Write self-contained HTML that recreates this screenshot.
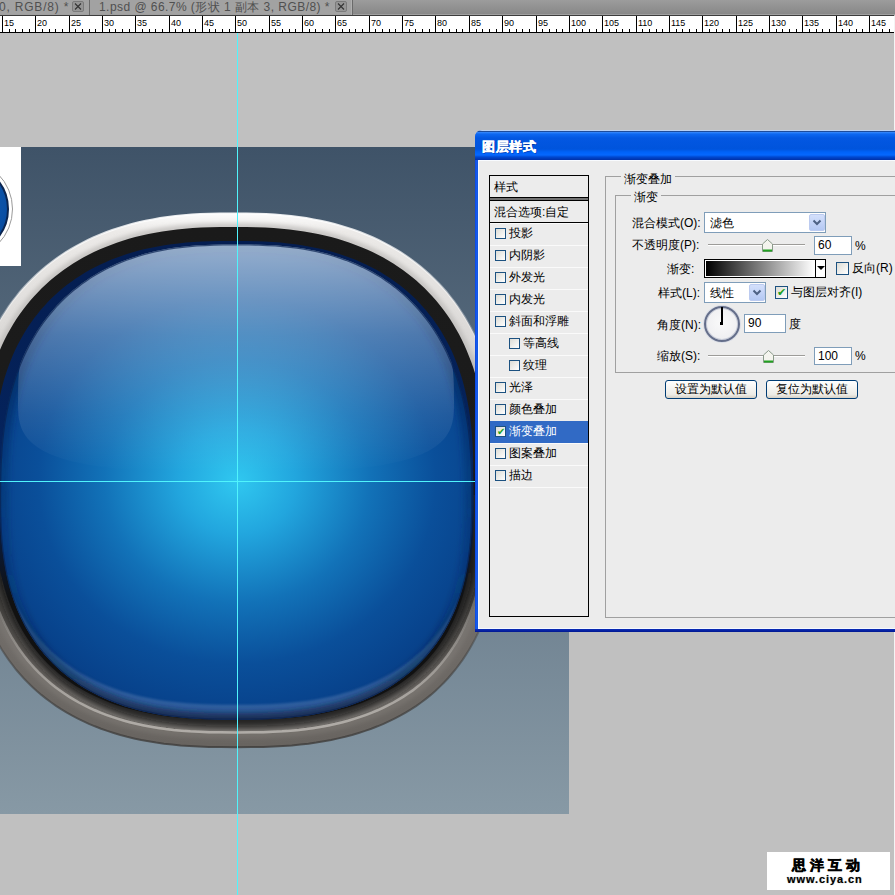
<!DOCTYPE html>
<html><head><meta charset="utf-8">
<style>
*{margin:0;padding:0;box-sizing:border-box}
html,body{width:895px;height:895px;overflow:hidden;background:#c0c0c0;font-family:"Liberation Sans",sans-serif}
.abs{position:absolute}
.rl{position:absolute;top:19px;font-size:9px;line-height:9px;color:#000;letter-spacing:0}
#tabs{position:absolute;left:0;top:0;width:895px;height:15px;background:linear-gradient(#9c9c9c,#888 14px,#a0a0a0 14px)}
.tab{position:absolute;top:0;height:14px;background:#a2a2a2;color:#505050;font-size:12px;line-height:12px;white-space:nowrap;overflow:hidden}
.xb{position:absolute;top:1px;width:12px;height:11px;border:1px solid #7a7a7a;background:#959595;border-radius:2px}
#ruler{position:absolute;left:0;top:15px;width:894px;height:18px;background:#fff;border-top:1px solid #3c3c3c;border-bottom:1px solid #000}
#doc{position:absolute;left:0;top:147px;width:569px;height:667px;background:linear-gradient(#3f5368,#8799a5)}
#dlg{position:absolute;left:475px;top:130px;width:430px;height:502px;background:linear-gradient(90deg,#0a48e0,#1a5ef0 2px,#0a50d8 3px);border-radius:7px 7px 0 0}
#title{position:absolute;left:0;top:0;width:100%;height:30px;border-radius:7px 7px 0 0;background:linear-gradient(#b8cff2 0,#b8cff2 1px,#1d4c9c 1px,#1d4c9c 2px,#3a8afc 2px,#0d68f2 4px,#0357e2 8px,#0054dc 19px,#0062f8 22px,#0568fe 25px,#0048d0 27px,#0030a8 30px)}
#title span{position:absolute;left:7px;top:10px;color:#fff;font-weight:bold;font-size:13px;line-height:14px;letter-spacing:0.5px;-webkit-text-stroke:0.35px #fff;text-shadow:1px 1px 0 rgba(0,30,120,0.5)}
#body{position:absolute;left:4px;top:30px;width:430px;height:468px;background:#ececec;box-shadow:inset 0 1px 0 #f8fbff}
#bb{position:absolute;left:0;top:499px;width:100%;height:3px;background:linear-gradient(#0b2cb8,#001890)}
.list{position:absolute;left:10px;top:15px;width:100px;height:442px;border:1px solid #000;background:#ececec}
.row{position:absolute;left:0;width:98px;height:22px;border-top:1px solid #fafafa;font-size:12px;color:#000}
.row.sel{background:#316ac5;color:#fff;border-top-color:#316ac5}
.lt{position:absolute;top:3px;line-height:14px;white-space:nowrap}
.cb{display:block;width:11px;height:11px;border:1px solid #1c5180;background:linear-gradient(135deg,#dcdcd6,#fff);font-size:10px;line-height:9px;color:#21a121;text-align:center}
.gb{position:absolute;border:1px solid #a0a0a0}
.gl{position:absolute;background:#ececec;font-size:12px;line-height:14px;padding:0 3px;white-space:nowrap}
.lab{position:absolute;font-size:12px;line-height:14px;white-space:nowrap;text-align:right}
.inp{position:absolute;background:#fff;border:1px solid #7f9db9;font-size:12px;line-height:16px;padding-left:3px}
.btn{position:absolute;height:19px;border:1px solid #003c74;border-radius:3px;background:linear-gradient(#fff,#ecebe6 80%,#d6d0c5);font-size:12px;line-height:16px;text-align:center}
</style></head><body>
<div id="tabs">
 <div class="tab" style="left:0;width:89px"><span style="position:absolute;left:-1px;top:1px;letter-spacing:0.8px">0, RGB/8) *</span><div class="xb" style="left:72px"><svg width="10" height="9" style="position:absolute;left:0;top:0"><path d="M2 1.5L8 7.5M8 1.5L2 7.5" stroke="#333" stroke-width="1.1"/></svg></div></div>
 <div style="position:absolute;left:89px;top:0;width:1px;height:15px;background:#6a6a6a"></div>
 <div class="tab" style="left:90px;width:262px"><span style="position:absolute;left:9px;top:1px;letter-spacing:0.45px">1.psd @ 66.7% (形状 1 副本 3, RGB/8) *</span><div class="xb" style="left:245px"><svg width="10" height="9" style="position:absolute;left:0;top:0"><path d="M2 1.5L8 7.5M8 1.5L2 7.5" stroke="#333" stroke-width="1.1"/></svg></div></div>
 <div style="position:absolute;left:351px;top:0;width:1px;height:15px;background:#b0b0b0"></div>
 <div style="position:absolute;left:352px;top:0;width:1px;height:15px;background:#6a6a6a"></div>
</div>
<div id="ruler"></div>
<div style="position:absolute;left:2px;top:16px;width:1px;height:16px;background:#000"></div>
<div class="rl" style="left:4px">15</div>
<div style="position:absolute;left:9px;top:29px;width:1px;height:3px;background:#000"></div>
<div style="position:absolute;left:15px;top:29px;width:1px;height:3px;background:#000"></div>
<div style="position:absolute;left:22px;top:29px;width:1px;height:3px;background:#000"></div>
<div style="position:absolute;left:29px;top:29px;width:1px;height:3px;background:#000"></div>
<div style="position:absolute;left:35px;top:16px;width:1px;height:16px;background:#000"></div>
<div class="rl" style="left:37px">20</div>
<div style="position:absolute;left:42px;top:29px;width:1px;height:3px;background:#000"></div>
<div style="position:absolute;left:49px;top:29px;width:1px;height:3px;background:#000"></div>
<div style="position:absolute;left:55px;top:29px;width:1px;height:3px;background:#000"></div>
<div style="position:absolute;left:62px;top:29px;width:1px;height:3px;background:#000"></div>
<div style="position:absolute;left:69px;top:16px;width:1px;height:16px;background:#000"></div>
<div class="rl" style="left:71px">25</div>
<div style="position:absolute;left:75px;top:29px;width:1px;height:3px;background:#000"></div>
<div style="position:absolute;left:82px;top:29px;width:1px;height:3px;background:#000"></div>
<div style="position:absolute;left:89px;top:29px;width:1px;height:3px;background:#000"></div>
<div style="position:absolute;left:95px;top:29px;width:1px;height:3px;background:#000"></div>
<div style="position:absolute;left:102px;top:16px;width:1px;height:16px;background:#000"></div>
<div class="rl" style="left:104px">30</div>
<div style="position:absolute;left:109px;top:29px;width:1px;height:3px;background:#000"></div>
<div style="position:absolute;left:115px;top:29px;width:1px;height:3px;background:#000"></div>
<div style="position:absolute;left:122px;top:29px;width:1px;height:3px;background:#000"></div>
<div style="position:absolute;left:129px;top:29px;width:1px;height:3px;background:#000"></div>
<div style="position:absolute;left:135px;top:16px;width:1px;height:16px;background:#000"></div>
<div class="rl" style="left:137px">35</div>
<div style="position:absolute;left:142px;top:29px;width:1px;height:3px;background:#000"></div>
<div style="position:absolute;left:149px;top:29px;width:1px;height:3px;background:#000"></div>
<div style="position:absolute;left:155px;top:29px;width:1px;height:3px;background:#000"></div>
<div style="position:absolute;left:162px;top:29px;width:1px;height:3px;background:#000"></div>
<div style="position:absolute;left:169px;top:16px;width:1px;height:16px;background:#000"></div>
<div class="rl" style="left:171px">40</div>
<div style="position:absolute;left:175px;top:29px;width:1px;height:3px;background:#000"></div>
<div style="position:absolute;left:182px;top:29px;width:1px;height:3px;background:#000"></div>
<div style="position:absolute;left:189px;top:29px;width:1px;height:3px;background:#000"></div>
<div style="position:absolute;left:195px;top:29px;width:1px;height:3px;background:#000"></div>
<div style="position:absolute;left:202px;top:16px;width:1px;height:16px;background:#000"></div>
<div class="rl" style="left:204px">45</div>
<div style="position:absolute;left:209px;top:29px;width:1px;height:3px;background:#000"></div>
<div style="position:absolute;left:215px;top:29px;width:1px;height:3px;background:#000"></div>
<div style="position:absolute;left:222px;top:29px;width:1px;height:3px;background:#000"></div>
<div style="position:absolute;left:229px;top:29px;width:1px;height:3px;background:#000"></div>
<div style="position:absolute;left:235px;top:16px;width:1px;height:16px;background:#000"></div>
<div class="rl" style="left:237px">50</div>
<div style="position:absolute;left:242px;top:29px;width:1px;height:3px;background:#000"></div>
<div style="position:absolute;left:249px;top:29px;width:1px;height:3px;background:#000"></div>
<div style="position:absolute;left:255px;top:29px;width:1px;height:3px;background:#000"></div>
<div style="position:absolute;left:262px;top:29px;width:1px;height:3px;background:#000"></div>
<div style="position:absolute;left:269px;top:16px;width:1px;height:16px;background:#000"></div>
<div class="rl" style="left:271px">55</div>
<div style="position:absolute;left:275px;top:29px;width:1px;height:3px;background:#000"></div>
<div style="position:absolute;left:282px;top:29px;width:1px;height:3px;background:#000"></div>
<div style="position:absolute;left:289px;top:29px;width:1px;height:3px;background:#000"></div>
<div style="position:absolute;left:295px;top:29px;width:1px;height:3px;background:#000"></div>
<div style="position:absolute;left:302px;top:16px;width:1px;height:16px;background:#000"></div>
<div class="rl" style="left:304px">60</div>
<div style="position:absolute;left:309px;top:29px;width:1px;height:3px;background:#000"></div>
<div style="position:absolute;left:315px;top:29px;width:1px;height:3px;background:#000"></div>
<div style="position:absolute;left:322px;top:29px;width:1px;height:3px;background:#000"></div>
<div style="position:absolute;left:329px;top:29px;width:1px;height:3px;background:#000"></div>
<div style="position:absolute;left:335px;top:16px;width:1px;height:16px;background:#000"></div>
<div class="rl" style="left:337px">65</div>
<div style="position:absolute;left:342px;top:29px;width:1px;height:3px;background:#000"></div>
<div style="position:absolute;left:349px;top:29px;width:1px;height:3px;background:#000"></div>
<div style="position:absolute;left:355px;top:29px;width:1px;height:3px;background:#000"></div>
<div style="position:absolute;left:362px;top:29px;width:1px;height:3px;background:#000"></div>
<div style="position:absolute;left:369px;top:16px;width:1px;height:16px;background:#000"></div>
<div class="rl" style="left:371px">70</div>
<div style="position:absolute;left:375px;top:29px;width:1px;height:3px;background:#000"></div>
<div style="position:absolute;left:382px;top:29px;width:1px;height:3px;background:#000"></div>
<div style="position:absolute;left:389px;top:29px;width:1px;height:3px;background:#000"></div>
<div style="position:absolute;left:395px;top:29px;width:1px;height:3px;background:#000"></div>
<div style="position:absolute;left:402px;top:16px;width:1px;height:16px;background:#000"></div>
<div class="rl" style="left:404px">75</div>
<div style="position:absolute;left:409px;top:29px;width:1px;height:3px;background:#000"></div>
<div style="position:absolute;left:415px;top:29px;width:1px;height:3px;background:#000"></div>
<div style="position:absolute;left:422px;top:29px;width:1px;height:3px;background:#000"></div>
<div style="position:absolute;left:429px;top:29px;width:1px;height:3px;background:#000"></div>
<div style="position:absolute;left:435px;top:16px;width:1px;height:16px;background:#000"></div>
<div class="rl" style="left:437px">80</div>
<div style="position:absolute;left:442px;top:29px;width:1px;height:3px;background:#000"></div>
<div style="position:absolute;left:449px;top:29px;width:1px;height:3px;background:#000"></div>
<div style="position:absolute;left:456px;top:29px;width:1px;height:3px;background:#000"></div>
<div style="position:absolute;left:462px;top:29px;width:1px;height:3px;background:#000"></div>
<div style="position:absolute;left:469px;top:16px;width:1px;height:16px;background:#000"></div>
<div class="rl" style="left:471px">85</div>
<div style="position:absolute;left:476px;top:29px;width:1px;height:3px;background:#000"></div>
<div style="position:absolute;left:482px;top:29px;width:1px;height:3px;background:#000"></div>
<div style="position:absolute;left:489px;top:29px;width:1px;height:3px;background:#000"></div>
<div style="position:absolute;left:496px;top:29px;width:1px;height:3px;background:#000"></div>
<div style="position:absolute;left:502px;top:16px;width:1px;height:16px;background:#000"></div>
<div class="rl" style="left:504px">90</div>
<div style="position:absolute;left:509px;top:29px;width:1px;height:3px;background:#000"></div>
<div style="position:absolute;left:516px;top:29px;width:1px;height:3px;background:#000"></div>
<div style="position:absolute;left:522px;top:29px;width:1px;height:3px;background:#000"></div>
<div style="position:absolute;left:529px;top:29px;width:1px;height:3px;background:#000"></div>
<div style="position:absolute;left:536px;top:16px;width:1px;height:16px;background:#000"></div>
<div class="rl" style="left:538px">95</div>
<div style="position:absolute;left:542px;top:29px;width:1px;height:3px;background:#000"></div>
<div style="position:absolute;left:549px;top:29px;width:1px;height:3px;background:#000"></div>
<div style="position:absolute;left:556px;top:29px;width:1px;height:3px;background:#000"></div>
<div style="position:absolute;left:562px;top:29px;width:1px;height:3px;background:#000"></div>
<div style="position:absolute;left:569px;top:16px;width:1px;height:16px;background:#000"></div>
<div class="rl" style="left:571px">100</div>
<div style="position:absolute;left:576px;top:29px;width:1px;height:3px;background:#000"></div>
<div style="position:absolute;left:582px;top:29px;width:1px;height:3px;background:#000"></div>
<div style="position:absolute;left:589px;top:29px;width:1px;height:3px;background:#000"></div>
<div style="position:absolute;left:596px;top:29px;width:1px;height:3px;background:#000"></div>
<div style="position:absolute;left:602px;top:16px;width:1px;height:16px;background:#000"></div>
<div class="rl" style="left:604px">105</div>
<div style="position:absolute;left:609px;top:29px;width:1px;height:3px;background:#000"></div>
<div style="position:absolute;left:616px;top:29px;width:1px;height:3px;background:#000"></div>
<div style="position:absolute;left:622px;top:29px;width:1px;height:3px;background:#000"></div>
<div style="position:absolute;left:629px;top:29px;width:1px;height:3px;background:#000"></div>
<div style="position:absolute;left:636px;top:16px;width:1px;height:16px;background:#000"></div>
<div class="rl" style="left:638px">110</div>
<div style="position:absolute;left:642px;top:29px;width:1px;height:3px;background:#000"></div>
<div style="position:absolute;left:649px;top:29px;width:1px;height:3px;background:#000"></div>
<div style="position:absolute;left:656px;top:29px;width:1px;height:3px;background:#000"></div>
<div style="position:absolute;left:662px;top:29px;width:1px;height:3px;background:#000"></div>
<div style="position:absolute;left:669px;top:16px;width:1px;height:16px;background:#000"></div>
<div class="rl" style="left:671px">115</div>
<div style="position:absolute;left:676px;top:29px;width:1px;height:3px;background:#000"></div>
<div style="position:absolute;left:682px;top:29px;width:1px;height:3px;background:#000"></div>
<div style="position:absolute;left:689px;top:29px;width:1px;height:3px;background:#000"></div>
<div style="position:absolute;left:696px;top:29px;width:1px;height:3px;background:#000"></div>
<div style="position:absolute;left:702px;top:16px;width:1px;height:16px;background:#000"></div>
<div class="rl" style="left:704px">120</div>
<div style="position:absolute;left:709px;top:29px;width:1px;height:3px;background:#000"></div>
<div style="position:absolute;left:716px;top:29px;width:1px;height:3px;background:#000"></div>
<div style="position:absolute;left:722px;top:29px;width:1px;height:3px;background:#000"></div>
<div style="position:absolute;left:729px;top:29px;width:1px;height:3px;background:#000"></div>
<div style="position:absolute;left:736px;top:16px;width:1px;height:16px;background:#000"></div>
<div class="rl" style="left:738px">125</div>
<div style="position:absolute;left:742px;top:29px;width:1px;height:3px;background:#000"></div>
<div style="position:absolute;left:749px;top:29px;width:1px;height:3px;background:#000"></div>
<div style="position:absolute;left:756px;top:29px;width:1px;height:3px;background:#000"></div>
<div style="position:absolute;left:762px;top:29px;width:1px;height:3px;background:#000"></div>
<div style="position:absolute;left:769px;top:16px;width:1px;height:16px;background:#000"></div>
<div class="rl" style="left:771px">130</div>
<div style="position:absolute;left:776px;top:29px;width:1px;height:3px;background:#000"></div>
<div style="position:absolute;left:782px;top:29px;width:1px;height:3px;background:#000"></div>
<div style="position:absolute;left:789px;top:29px;width:1px;height:3px;background:#000"></div>
<div style="position:absolute;left:796px;top:29px;width:1px;height:3px;background:#000"></div>
<div style="position:absolute;left:802px;top:16px;width:1px;height:16px;background:#000"></div>
<div class="rl" style="left:804px">135</div>
<div style="position:absolute;left:809px;top:29px;width:1px;height:3px;background:#000"></div>
<div style="position:absolute;left:816px;top:29px;width:1px;height:3px;background:#000"></div>
<div style="position:absolute;left:822px;top:29px;width:1px;height:3px;background:#000"></div>
<div style="position:absolute;left:829px;top:29px;width:1px;height:3px;background:#000"></div>
<div style="position:absolute;left:836px;top:16px;width:1px;height:16px;background:#000"></div>
<div class="rl" style="left:838px">140</div>
<div style="position:absolute;left:842px;top:29px;width:1px;height:3px;background:#000"></div>
<div style="position:absolute;left:849px;top:29px;width:1px;height:3px;background:#000"></div>
<div style="position:absolute;left:856px;top:29px;width:1px;height:3px;background:#000"></div>
<div style="position:absolute;left:862px;top:29px;width:1px;height:3px;background:#000"></div>
<div style="position:absolute;left:869px;top:16px;width:1px;height:16px;background:#000"></div>
<div class="rl" style="left:871px">145</div>
<div style="position:absolute;left:876px;top:29px;width:1px;height:3px;background:#000"></div>
<div style="position:absolute;left:882px;top:29px;width:1px;height:3px;background:#000"></div>
<div style="position:absolute;left:889px;top:29px;width:1px;height:3px;background:#000"></div>
<div id="doc"></div>
<div class="abs" style="left:894px;top:16px;width:1px;height:879px;background:#f4f4f4"></div>
<div class="abs" style="left:0;top:147px;width:21px;height:119px;background:#fff;overflow:hidden">
 <div class="abs" style="left:-87px;top:11.5px;width:100px;height:100px;border-radius:50%;background:#fff;border:1.5px solid #9a9a9a"></div>
 <div class="abs" style="left:-83px;top:15.5px;width:92px;height:92px;border-radius:50%;background:radial-gradient(circle at 40% 40%,#1a6cc0,#0a4fa4 70%,#083c80);border:2px solid #0b2550"></div>
</div>
<svg class="abs" style="left:0;top:0" width="895" height="895" viewBox="0 0 895 895">
<defs>
 <linearGradient id="gA" x1="0" y1="213" x2="0" y2="747" gradientUnits="userSpaceOnUse">
  <stop offset="0" stop-color="#fcfcfc"/><stop offset="0.035" stop-color="#eceae8"/><stop offset="0.16" stop-color="#e2e0de"/><stop offset="0.26" stop-color="#d8d6d4"/><stop offset="0.4" stop-color="#a4a2a0"/><stop offset="0.52" stop-color="#83807d"/><stop offset="0.65" stop-color="#75716d"/><stop offset="1" stop-color="#686460"/>
 </linearGradient>
 <linearGradient id="gAs" x1="0" y1="213" x2="0" y2="747" gradientUnits="userSpaceOnUse">
  <stop offset="0" stop-color="#fff" stop-opacity="0.9"/><stop offset="0.3" stop-color="#fff" stop-opacity="0"/><stop offset="0.55" stop-color="#3e3c3a" stop-opacity="0"/><stop offset="1" stop-color="#3e3c3a" stop-opacity="0.8"/>
 </linearGradient>
 <linearGradient id="gB" x1="0" y1="226" x2="0" y2="734" gradientUnits="userSpaceOnUse">
  <stop offset="0" stop-color="#1a1a1a"/><stop offset="0.5" stop-color="#1c1c1c"/><stop offset="0.75" stop-color="#474542"/><stop offset="0.9" stop-color="#6e6a66"/><stop offset="1" stop-color="#938f8a"/>
 </linearGradient>
 <linearGradient id="gBs" x1="0" y1="226" x2="0" y2="734" gradientUnits="userSpaceOnUse">
  <stop offset="0" stop-color="#c8c4bf" stop-opacity="0"/><stop offset="0.6" stop-color="#c8c4bf" stop-opacity="0"/><stop offset="1" stop-color="#b0aca7" stop-opacity="1"/>
 </linearGradient>
 <linearGradient id="gC" x1="0" y1="240" x2="0" y2="720" gradientUnits="userSpaceOnUse">
  <stop offset="0" stop-color="#041d50"/><stop offset="0.5" stop-color="#05245e"/><stop offset="0.75" stop-color="#111" /><stop offset="1" stop-color="#111"/>
 </linearGradient>
 <radialGradient id="gF" cx="237" cy="481" r="265" gradientUnits="userSpaceOnUse" gradientTransform="translate(237 481) scale(1 0.92) translate(-237 -481)">
  <stop offset="0" stop-color="#30c8f0"/><stop offset="0.22" stop-color="#22a6de"/><stop offset="0.5" stop-color="#1272b8"/><stop offset="0.75" stop-color="#0a4f9a"/><stop offset="1" stop-color="#073f88"/>
 </radialGradient>
 <linearGradient id="gG" x1="0" y1="244" x2="0" y2="472" gradientUnits="userSpaceOnUse">
  <stop offset="0" stop-color="#fff" stop-opacity="0.58"/><stop offset="0.4" stop-color="#fff" stop-opacity="0.28"/><stop offset="0.75" stop-color="#fff" stop-opacity="0.1"/><stop offset="1" stop-color="#fff" stop-opacity="0"/>
 </linearGradient>
 <linearGradient id="gH" x1="0" y1="530" x2="0" y2="722" gradientUnits="userSpaceOnUse">
  <stop offset="0" stop-color="#3464a4" stop-opacity="0"/><stop offset="0.45" stop-color="#3464a4" stop-opacity="0.85"/><stop offset="1" stop-color="#3060a0" stop-opacity="1"/>
 </linearGradient>
 <linearGradient id="gN" x1="0" y1="240" x2="0" y2="720" gradientUnits="userSpaceOnUse">
  <stop offset="0" stop-color="#04245c" stop-opacity="0.15"/><stop offset="0.2" stop-color="#04245c" stop-opacity="0.5"/><stop offset="0.3" stop-color="#04245c" stop-opacity="0.6"/><stop offset="0.5" stop-color="#05306c" stop-opacity="0.5"/><stop offset="0.7" stop-color="#05306c" stop-opacity="0.1"/><stop offset="0.85" stop-color="#05306c" stop-opacity="0"/>
 </linearGradient>
 <clipPath id="cA"><path d="M500.8 475.6 L501.1 491.3 L501.3 502.6 L501.4 512.7 L501.2 522.1 L500.9 530.9 L500.4 539.3 L499.8 547.4 L499.0 555.2 L498.0 562.7 L496.9 570.0 L495.7 577.1 L494.3 584.1 L492.7 590.8 L491.0 597.4 L489.2 603.8 L487.2 610.1 L485.0 616.2 L482.8 622.1 L480.3 627.9 L477.7 633.6 L475.0 639.1 L472.1 644.5 L469.1 649.8 L465.9 654.9 L462.6 659.9 L459.1 664.7 L455.5 669.5 L451.7 674.0 L447.8 678.5 L443.8 682.8 L439.6 686.9 L435.3 691.0 L430.8 694.9 L426.2 698.6 L421.4 702.3 L416.4 705.8 L411.3 709.1 L406.0 712.3 L400.6 715.4 L395.0 718.3 L389.3 721.1 L383.5 723.8 L377.5 726.3 L371.3 728.7 L365.1 730.9 L358.6 733.0 L352.0 735.0 L345.2 736.8 L338.3 738.4 L331.1 740.0 L323.8 741.3 L316.2 742.6 L308.4 743.7 L300.3 744.6 L291.8 745.4 L283.0 746.0 L273.6 746.5 L263.4 746.9 L252.1 747.1 L236.2 747.2 L220.3 747.1 L209.0 746.9 L198.8 746.5 L189.4 746.0 L180.6 745.4 L172.1 744.6 L164.0 743.7 L156.2 742.6 L148.6 741.3 L141.3 740.0 L134.1 738.4 L127.2 736.8 L120.4 735.0 L113.8 733.0 L107.3 730.9 L101.1 728.7 L94.9 726.3 L88.9 723.8 L83.1 721.1 L77.4 718.3 L71.8 715.4 L66.4 712.3 L61.1 709.1 L56.0 705.8 L51.0 702.3 L46.1 698.6 L41.4 694.9 L36.8 691.0 L32.4 686.9 L28.1 682.8 L23.9 678.5 L19.9 674.0 L16.0 669.5 L12.3 664.7 L8.7 659.9 L5.3 654.9 L1.9 649.8 L-1.2 644.5 L-4.3 639.1 L-7.2 633.6 L-9.9 627.9 L-12.5 622.1 L-15.0 616.2 L-17.3 610.1 L-19.5 603.8 L-21.5 597.4 L-23.4 590.8 L-25.1 584.1 L-26.7 577.1 L-28.1 570.0 L-29.4 562.7 L-30.6 555.2 L-31.6 547.4 L-32.4 539.3 L-33.1 530.9 L-33.7 522.1 L-34.1 512.7 L-34.3 502.6 L-34.4 491.3 L-34.4 475.6 L-34.3 462.6 L-34.1 452.7 L-33.7 443.6 L-33.2 435.0 L-32.5 426.8 L-31.6 419.0 L-30.7 411.4 L-29.5 404.0 L-28.2 396.8 L-26.8 389.8 L-25.2 382.9 L-23.5 376.2 L-21.6 369.7 L-19.6 363.3 L-17.4 357.0 L-15.1 350.9 L-12.6 344.9 L-10.0 339.1 L-7.3 333.3 L-4.4 327.7 L-1.3 322.2 L1.8 316.9 L5.2 311.7 L8.6 306.6 L12.2 301.6 L16.0 296.8 L19.8 292.0 L23.8 287.5 L28.0 283.0 L32.3 278.7 L36.7 274.5 L41.2 270.4 L45.9 266.5 L50.7 262.7 L55.7 259.0 L60.7 255.5 L65.9 252.1 L71.3 248.9 L76.7 245.8 L82.3 242.8 L88.0 239.9 L93.9 237.2 L99.9 234.7 L106.0 232.3 L112.2 230.0 L118.6 227.9 L125.1 225.9 L131.8 224.0 L138.7 222.3 L145.6 220.8 L152.8 219.4 L160.1 218.1 L167.7 217.0 L175.4 216.1 L183.5 215.2 L191.8 214.6 L200.5 214.1 L209.8 213.7 L220.0 213.5 L233.2 213.4 L246.4 213.5 L256.6 213.7 L265.9 214.1 L274.6 214.6 L282.9 215.2 L291.0 216.1 L298.7 217.0 L306.3 218.1 L313.6 219.4 L320.8 220.8 L327.7 222.3 L334.6 224.0 L341.3 225.9 L347.8 227.9 L354.2 230.0 L360.4 232.3 L366.5 234.7 L372.5 237.2 L378.4 239.9 L384.1 242.8 L389.7 245.8 L395.1 248.9 L400.5 252.1 L405.7 255.5 L410.7 259.0 L415.7 262.7 L420.5 266.5 L425.2 270.4 L429.7 274.5 L434.1 278.7 L438.4 283.0 L442.6 287.5 L446.6 292.0 L450.4 296.8 L454.2 301.6 L457.8 306.6 L461.2 311.7 L464.6 316.9 L467.7 322.2 L470.8 327.7 L473.7 333.3 L476.4 339.1 L479.0 344.9 L481.5 350.9 L483.8 357.0 L486.0 363.3 L488.0 369.7 L489.9 376.2 L491.6 382.9 L493.2 389.8 L494.6 396.8 L495.9 404.0 L497.1 411.4 L498.0 419.0 L498.9 426.8 L499.6 435.0 L500.1 443.6 L500.5 452.7 L500.7 462.6Z"/></clipPath>
 <linearGradient id="gBh" x1="0" y1="226" x2="0" y2="734" gradientUnits="userSpaceOnUse">
  <stop offset="0" stop-color="#a8a49f" stop-opacity="0"/><stop offset="0.6" stop-color="#a8a49f" stop-opacity="0"/><stop offset="0.85" stop-color="#a8a49f" stop-opacity="0.18"/><stop offset="1" stop-color="#a8a49f" stop-opacity="0.18"/>
 </linearGradient>
 <linearGradient id="gBt" x1="0" y1="213" x2="0" y2="520" gradientUnits="userSpaceOnUse">
  <stop offset="0" stop-color="#9a9896" stop-opacity="0.45"/><stop offset="0.7" stop-color="#9a9896" stop-opacity="0.3"/><stop offset="1" stop-color="#9a9896" stop-opacity="0"/>
 </linearGradient>
 <linearGradient id="gFs" x1="0" y1="226" x2="0" y2="734" gradientUnits="userSpaceOnUse">
  <stop offset="0" stop-color="#141414" stop-opacity="0"/><stop offset="0.45" stop-color="#141414" stop-opacity="0"/><stop offset="0.7" stop-color="#141414" stop-opacity="0.9"/><stop offset="1" stop-color="#141414" stop-opacity="0.9"/>
 </linearGradient>
 <mask id="mRim" maskUnits="userSpaceOnUse" x="0" y="0" width="895" height="895"><path d="M472.4 497.3 L472.4 510.1 L472.2 519.3 L471.9 527.5 L471.4 535.2 L470.9 542.4 L470.2 549.2 L469.3 555.8 L468.4 562.2 L467.3 568.4 L466.1 574.4 L464.8 580.2 L463.3 585.9 L461.7 591.4 L460.0 596.8 L458.2 602.0 L456.3 607.2 L454.2 612.2 L452.0 617.1 L449.7 621.8 L447.2 626.5 L444.7 631.0 L442.0 635.4 L439.2 639.7 L436.3 643.9 L433.2 648.0 L430.0 652.0 L426.8 655.9 L423.4 659.6 L419.8 663.3 L416.2 666.8 L412.5 670.2 L408.6 673.6 L404.6 676.8 L400.5 679.8 L396.3 682.8 L391.9 685.7 L387.5 688.4 L382.9 691.1 L378.2 693.6 L373.4 696.0 L368.4 698.3 L363.4 700.5 L358.2 702.6 L352.9 704.5 L347.4 706.4 L341.8 708.1 L336.1 709.7 L330.2 711.2 L324.2 712.5 L318.0 713.8 L311.7 714.9 L305.1 715.9 L298.3 716.8 L291.3 717.6 L284.0 718.3 L276.4 718.8 L268.3 719.2 L259.5 719.5 L249.7 719.7 L236.2 719.8 L222.6 719.7 L212.8 719.5 L204.1 719.2 L196.0 718.8 L188.3 718.3 L181.0 717.6 L174.0 716.8 L167.3 715.9 L160.7 714.9 L154.3 713.8 L148.1 712.5 L142.1 711.2 L136.3 709.7 L130.5 708.1 L125.0 706.4 L119.5 704.5 L114.2 702.6 L109.0 700.5 L103.9 698.3 L99.0 696.0 L94.2 693.6 L89.5 691.1 L84.9 688.4 L80.4 685.7 L76.1 682.8 L71.9 679.8 L67.8 676.8 L63.8 673.6 L59.9 670.2 L56.2 666.8 L52.5 663.3 L49.0 659.6 L45.6 655.9 L42.3 652.0 L39.1 648.0 L36.1 643.9 L33.2 639.7 L30.4 635.4 L27.7 631.0 L25.1 626.5 L22.7 621.8 L20.4 617.1 L18.2 612.2 L16.1 607.2 L14.1 602.0 L12.3 596.8 L10.6 591.4 L9.0 585.9 L7.6 580.2 L6.3 574.4 L5.1 568.4 L4.0 562.2 L3.0 555.8 L2.2 549.2 L1.5 542.4 L0.9 535.2 L0.5 527.5 L0.2 519.3 L-0.0 510.1 L-0.1 497.3 L-0.0 483.4 L0.2 473.2 L0.5 464.0 L1.0 455.5 L1.5 447.3 L2.2 439.6 L3.1 432.1 L4.0 424.9 L5.1 417.9 L6.4 411.1 L7.7 404.5 L9.2 398.0 L10.8 391.7 L12.5 385.6 L14.4 379.6 L16.3 373.7 L18.4 368.0 L20.7 362.4 L23.0 357.0 L25.5 351.6 L28.1 346.4 L30.8 341.4 L33.7 336.4 L36.6 331.6 L39.7 326.9 L42.9 322.3 L46.2 317.9 L49.7 313.6 L53.3 309.4 L56.9 305.3 L60.7 301.4 L64.6 297.5 L68.7 293.9 L72.8 290.3 L77.1 286.9 L81.5 283.6 L86.0 280.4 L90.6 277.3 L95.3 274.4 L100.2 271.6 L105.2 269.0 L110.3 266.5 L115.5 264.1 L120.8 261.8 L126.3 259.7 L131.9 257.7 L137.6 255.9 L143.5 254.1 L149.5 252.6 L155.7 251.1 L162.1 249.8 L168.6 248.6 L175.3 247.6 L182.3 246.7 L189.5 246.0 L197.1 245.3 L205.1 244.9 L213.7 244.5 L223.2 244.3 L236.2 244.2 L249.1 244.3 L258.7 244.5 L267.3 244.9 L275.3 245.3 L282.8 246.0 L290.1 246.7 L297.0 247.6 L303.8 248.6 L310.3 249.8 L316.7 251.1 L322.8 252.6 L328.9 254.1 L334.7 255.9 L340.5 257.7 L346.1 259.7 L351.5 261.8 L356.9 264.1 L362.1 266.5 L367.2 269.0 L372.2 271.6 L377.0 274.4 L381.8 277.3 L386.4 280.4 L390.9 283.6 L395.3 286.9 L399.5 290.3 L403.7 293.9 L407.7 297.5 L411.6 301.4 L415.4 305.3 L419.1 309.4 L422.7 313.6 L426.1 317.9 L429.4 322.3 L432.6 326.9 L435.7 331.6 L438.7 336.4 L441.5 341.4 L444.3 346.4 L446.9 351.6 L449.3 357.0 L451.7 362.4 L453.9 368.0 L456.0 373.7 L458.0 379.6 L459.8 385.6 L461.6 391.7 L463.2 398.0 L464.7 404.5 L466.0 411.1 L467.2 417.9 L468.3 424.9 L469.3 432.1 L470.1 439.6 L470.8 447.3 L471.4 455.5 L471.9 464.0 L472.2 473.2 L472.4 483.4Z" fill="#fff"/><path d="M472.4 497.3 L472.4 510.1 L472.2 519.3 L471.9 527.5 L471.4 535.2 L470.9 542.4 L470.2 549.2 L469.3 555.8 L468.4 562.2 L467.3 568.4 L466.1 574.4 L464.8 580.2 L463.3 585.9 L461.7 591.4 L460.0 596.8 L458.2 602.0 L456.3 607.2 L454.2 612.2 L452.0 617.1 L449.7 621.8 L447.2 626.5 L444.7 631.0 L442.0 635.4 L439.2 639.7 L436.3 643.9 L433.2 648.0 L430.0 652.0 L426.8 655.9 L423.4 659.6 L419.8 663.3 L416.2 666.8 L412.5 670.2 L408.6 673.6 L404.6 676.8 L400.5 679.8 L396.3 682.8 L391.9 685.7 L387.5 688.4 L382.9 691.1 L378.2 693.6 L373.4 696.0 L368.4 698.3 L363.4 700.5 L358.2 702.6 L352.9 704.5 L347.4 706.4 L341.8 708.1 L336.1 709.7 L330.2 711.2 L324.2 712.5 L318.0 713.8 L311.7 714.9 L305.1 715.9 L298.3 716.8 L291.3 717.6 L284.0 718.3 L276.4 718.8 L268.3 719.2 L259.5 719.5 L249.7 719.7 L236.2 719.8 L222.6 719.7 L212.8 719.5 L204.1 719.2 L196.0 718.8 L188.3 718.3 L181.0 717.6 L174.0 716.8 L167.3 715.9 L160.7 714.9 L154.3 713.8 L148.1 712.5 L142.1 711.2 L136.3 709.7 L130.5 708.1 L125.0 706.4 L119.5 704.5 L114.2 702.6 L109.0 700.5 L103.9 698.3 L99.0 696.0 L94.2 693.6 L89.5 691.1 L84.9 688.4 L80.4 685.7 L76.1 682.8 L71.9 679.8 L67.8 676.8 L63.8 673.6 L59.9 670.2 L56.2 666.8 L52.5 663.3 L49.0 659.6 L45.6 655.9 L42.3 652.0 L39.1 648.0 L36.1 643.9 L33.2 639.7 L30.4 635.4 L27.7 631.0 L25.1 626.5 L22.7 621.8 L20.4 617.1 L18.2 612.2 L16.1 607.2 L14.1 602.0 L12.3 596.8 L10.6 591.4 L9.0 585.9 L7.6 580.2 L6.3 574.4 L5.1 568.4 L4.0 562.2 L3.0 555.8 L2.2 549.2 L1.5 542.4 L0.9 535.2 L0.5 527.5 L0.2 519.3 L-0.0 510.1 L-0.1 497.3 L-0.0 483.4 L0.2 473.2 L0.5 464.0 L1.0 455.5 L1.5 447.3 L2.2 439.6 L3.1 432.1 L4.0 424.9 L5.1 417.9 L6.4 411.1 L7.7 404.5 L9.2 398.0 L10.8 391.7 L12.5 385.6 L14.4 379.6 L16.3 373.7 L18.4 368.0 L20.7 362.4 L23.0 357.0 L25.5 351.6 L28.1 346.4 L30.8 341.4 L33.7 336.4 L36.6 331.6 L39.7 326.9 L42.9 322.3 L46.2 317.9 L49.7 313.6 L53.3 309.4 L56.9 305.3 L60.7 301.4 L64.6 297.5 L68.7 293.9 L72.8 290.3 L77.1 286.9 L81.5 283.6 L86.0 280.4 L90.6 277.3 L95.3 274.4 L100.2 271.6 L105.2 269.0 L110.3 266.5 L115.5 264.1 L120.8 261.8 L126.3 259.7 L131.9 257.7 L137.6 255.9 L143.5 254.1 L149.5 252.6 L155.7 251.1 L162.1 249.8 L168.6 248.6 L175.3 247.6 L182.3 246.7 L189.5 246.0 L197.1 245.3 L205.1 244.9 L213.7 244.5 L223.2 244.3 L236.2 244.2 L249.1 244.3 L258.7 244.5 L267.3 244.9 L275.3 245.3 L282.8 246.0 L290.1 246.7 L297.0 247.6 L303.8 248.6 L310.3 249.8 L316.7 251.1 L322.8 252.6 L328.9 254.1 L334.7 255.9 L340.5 257.7 L346.1 259.7 L351.5 261.8 L356.9 264.1 L362.1 266.5 L367.2 269.0 L372.2 271.6 L377.0 274.4 L381.8 277.3 L386.4 280.4 L390.9 283.6 L395.3 286.9 L399.5 290.3 L403.7 293.9 L407.7 297.5 L411.6 301.4 L415.4 305.3 L419.1 309.4 L422.7 313.6 L426.1 317.9 L429.4 322.3 L432.6 326.9 L435.7 331.6 L438.7 336.4 L441.5 341.4 L444.3 346.4 L446.9 351.6 L449.3 357.0 L451.7 362.4 L453.9 368.0 L456.0 373.7 L458.0 379.6 L459.8 385.6 L461.6 391.7 L463.2 398.0 L464.7 404.5 L466.0 411.1 L467.2 417.9 L468.3 424.9 L469.3 432.1 L470.1 439.6 L470.8 447.3 L471.4 455.5 L471.9 464.0 L472.2 473.2 L472.4 483.4Z" transform="translate(236 -15) scale(1.025 1) translate(-236 0)" fill="#000" filter="url(#bl1)"/></mask>
 <linearGradient id="gHd" x1="0" y1="480" x2="0" y2="722" gradientUnits="userSpaceOnUse">
  <stop offset="0" stop-color="#0c1e3a" stop-opacity="0"/><stop offset="0.5" stop-color="#0c1e3a" stop-opacity="0.2"/><stop offset="1" stop-color="#0c1e3a" stop-opacity="0.75"/>
 </linearGradient>
 <clipPath id="cF"><path d="M472.4 497.3 L472.4 510.1 L472.2 519.3 L471.9 527.5 L471.4 535.2 L470.9 542.4 L470.2 549.2 L469.3 555.8 L468.4 562.2 L467.3 568.4 L466.1 574.4 L464.8 580.2 L463.3 585.9 L461.7 591.4 L460.0 596.8 L458.2 602.0 L456.3 607.2 L454.2 612.2 L452.0 617.1 L449.7 621.8 L447.2 626.5 L444.7 631.0 L442.0 635.4 L439.2 639.7 L436.3 643.9 L433.2 648.0 L430.0 652.0 L426.8 655.9 L423.4 659.6 L419.8 663.3 L416.2 666.8 L412.5 670.2 L408.6 673.6 L404.6 676.8 L400.5 679.8 L396.3 682.8 L391.9 685.7 L387.5 688.4 L382.9 691.1 L378.2 693.6 L373.4 696.0 L368.4 698.3 L363.4 700.5 L358.2 702.6 L352.9 704.5 L347.4 706.4 L341.8 708.1 L336.1 709.7 L330.2 711.2 L324.2 712.5 L318.0 713.8 L311.7 714.9 L305.1 715.9 L298.3 716.8 L291.3 717.6 L284.0 718.3 L276.4 718.8 L268.3 719.2 L259.5 719.5 L249.7 719.7 L236.2 719.8 L222.6 719.7 L212.8 719.5 L204.1 719.2 L196.0 718.8 L188.3 718.3 L181.0 717.6 L174.0 716.8 L167.3 715.9 L160.7 714.9 L154.3 713.8 L148.1 712.5 L142.1 711.2 L136.3 709.7 L130.5 708.1 L125.0 706.4 L119.5 704.5 L114.2 702.6 L109.0 700.5 L103.9 698.3 L99.0 696.0 L94.2 693.6 L89.5 691.1 L84.9 688.4 L80.4 685.7 L76.1 682.8 L71.9 679.8 L67.8 676.8 L63.8 673.6 L59.9 670.2 L56.2 666.8 L52.5 663.3 L49.0 659.6 L45.6 655.9 L42.3 652.0 L39.1 648.0 L36.1 643.9 L33.2 639.7 L30.4 635.4 L27.7 631.0 L25.1 626.5 L22.7 621.8 L20.4 617.1 L18.2 612.2 L16.1 607.2 L14.1 602.0 L12.3 596.8 L10.6 591.4 L9.0 585.9 L7.6 580.2 L6.3 574.4 L5.1 568.4 L4.0 562.2 L3.0 555.8 L2.2 549.2 L1.5 542.4 L0.9 535.2 L0.5 527.5 L0.2 519.3 L-0.0 510.1 L-0.1 497.3 L-0.0 483.4 L0.2 473.2 L0.5 464.0 L1.0 455.5 L1.5 447.3 L2.2 439.6 L3.1 432.1 L4.0 424.9 L5.1 417.9 L6.4 411.1 L7.7 404.5 L9.2 398.0 L10.8 391.7 L12.5 385.6 L14.4 379.6 L16.3 373.7 L18.4 368.0 L20.7 362.4 L23.0 357.0 L25.5 351.6 L28.1 346.4 L30.8 341.4 L33.7 336.4 L36.6 331.6 L39.7 326.9 L42.9 322.3 L46.2 317.9 L49.7 313.6 L53.3 309.4 L56.9 305.3 L60.7 301.4 L64.6 297.5 L68.7 293.9 L72.8 290.3 L77.1 286.9 L81.5 283.6 L86.0 280.4 L90.6 277.3 L95.3 274.4 L100.2 271.6 L105.2 269.0 L110.3 266.5 L115.5 264.1 L120.8 261.8 L126.3 259.7 L131.9 257.7 L137.6 255.9 L143.5 254.1 L149.5 252.6 L155.7 251.1 L162.1 249.8 L168.6 248.6 L175.3 247.6 L182.3 246.7 L189.5 246.0 L197.1 245.3 L205.1 244.9 L213.7 244.5 L223.2 244.3 L236.2 244.2 L249.1 244.3 L258.7 244.5 L267.3 244.9 L275.3 245.3 L282.8 246.0 L290.1 246.7 L297.0 247.6 L303.8 248.6 L310.3 249.8 L316.7 251.1 L322.8 252.6 L328.9 254.1 L334.7 255.9 L340.5 257.7 L346.1 259.7 L351.5 261.8 L356.9 264.1 L362.1 266.5 L367.2 269.0 L372.2 271.6 L377.0 274.4 L381.8 277.3 L386.4 280.4 L390.9 283.6 L395.3 286.9 L399.5 290.3 L403.7 293.9 L407.7 297.5 L411.6 301.4 L415.4 305.3 L419.1 309.4 L422.7 313.6 L426.1 317.9 L429.4 322.3 L432.6 326.9 L435.7 331.6 L438.7 336.4 L441.5 341.4 L444.3 346.4 L446.9 351.6 L449.3 357.0 L451.7 362.4 L453.9 368.0 L456.0 373.7 L458.0 379.6 L459.8 385.6 L461.6 391.7 L463.2 398.0 L464.7 404.5 L466.0 411.1 L467.2 417.9 L468.3 424.9 L469.3 432.1 L470.1 439.6 L470.8 447.3 L471.4 455.5 L471.9 464.0 L472.2 473.2 L472.4 483.4Z"/></clipPath>
 <clipPath id="cB"><path d="M487.3 475.7 L487.6 491.6 L487.8 502.8 L487.9 512.6 L487.7 521.7 L487.4 530.3 L486.9 538.4 L486.3 546.2 L485.6 553.7 L484.7 560.9 L483.6 567.9 L482.4 574.6 L481.1 581.2 L479.6 587.6 L478.0 593.8 L476.3 599.9 L474.4 605.8 L472.4 611.5 L470.2 617.1 L467.9 622.5 L465.5 627.8 L463.0 633.0 L460.3 638.0 L457.5 642.9 L454.5 647.6 L451.4 652.2 L448.2 656.7 L444.9 661.1 L441.4 665.3 L437.8 669.4 L434.1 673.4 L430.2 677.2 L426.2 681.0 L422.1 684.6 L417.8 688.0 L413.5 691.4 L408.8 694.6 L404.1 697.7 L399.1 700.7 L394.1 703.6 L388.9 706.3 L383.5 708.9 L378.1 711.4 L372.4 713.8 L366.6 716.0 L360.7 718.1 L354.6 720.1 L348.4 722.0 L341.9 723.7 L335.3 725.3 L328.5 726.7 L321.5 728.0 L314.2 729.2 L306.7 730.3 L298.9 731.2 L290.7 731.9 L282.1 732.6 L273.0 733.0 L263.1 733.4 L251.9 733.6 L236.2 733.7 L220.5 733.6 L209.3 733.4 L199.4 733.0 L190.3 732.6 L181.7 731.9 L173.5 731.2 L165.7 730.3 L158.2 729.2 L150.9 728.0 L143.9 726.7 L137.1 725.3 L130.5 723.7 L124.0 722.0 L117.8 720.1 L111.7 718.1 L105.8 716.0 L100.0 713.8 L94.3 711.4 L88.9 708.9 L83.5 706.3 L78.3 703.6 L73.3 700.7 L68.3 697.7 L63.6 694.6 L58.9 691.3 L54.4 688.0 L50.0 684.5 L45.8 680.8 L41.7 677.1 L37.7 673.2 L33.8 669.2 L30.1 665.1 L26.5 660.9 L23.0 656.5 L19.7 652.0 L16.5 647.4 L13.4 642.6 L10.4 637.7 L7.6 632.7 L4.9 627.5 L2.3 622.2 L-0.1 616.8 L-2.4 611.2 L-4.6 605.5 L-6.6 599.6 L-8.5 593.5 L-10.3 587.3 L-12.0 580.9 L-13.5 574.3 L-14.9 567.5 L-16.1 560.5 L-17.2 553.3 L-18.1 545.8 L-19.0 538.0 L-19.6 529.9 L-20.2 521.3 L-20.6 512.3 L-20.8 502.4 L-20.9 491.3 L-20.9 475.6 L-20.8 462.8 L-20.6 453.1 L-20.2 444.3 L-19.7 436.0 L-19.0 428.1 L-18.2 420.5 L-17.3 413.2 L-16.2 406.2 L-15.0 399.3 L-13.6 392.6 L-12.1 386.1 L-10.5 379.8 L-8.7 373.6 L-6.8 367.5 L-4.7 361.6 L-2.5 355.9 L-0.2 350.2 L2.2 344.7 L4.8 339.3 L7.5 334.1 L10.4 329.0 L13.3 324.0 L16.4 319.1 L19.7 314.3 L23.0 309.7 L26.5 305.2 L30.1 300.8 L33.9 296.5 L37.7 292.4 L41.7 288.3 L45.8 284.4 L50.1 280.6 L54.4 277.0 L58.9 273.4 L63.5 270.0 L68.3 266.7 L73.1 263.5 L78.1 260.5 L83.2 257.6 L88.5 254.8 L93.9 252.1 L99.4 249.6 L105.0 247.2 L110.8 244.9 L116.7 242.7 L122.7 240.7 L128.9 238.8 L135.2 237.1 L141.7 235.5 L148.4 234.0 L155.2 232.7 L162.3 231.5 L169.5 230.4 L177.0 229.5 L184.7 228.7 L192.7 228.0 L201.2 227.5 L210.2 227.2 L220.2 227.0 L233.2 226.9 L246.2 227.0 L256.2 227.2 L265.2 227.5 L273.7 228.0 L281.7 228.7 L289.4 229.5 L296.9 230.4 L304.1 231.5 L311.2 232.7 L318.0 234.0 L324.7 235.5 L331.2 237.1 L337.5 238.8 L343.7 240.7 L349.7 242.7 L355.6 244.9 L361.4 247.2 L367.0 249.6 L372.5 252.1 L377.9 254.8 L383.2 257.6 L388.3 260.5 L393.3 263.5 L398.1 266.7 L402.9 270.0 L407.5 273.4 L412.0 277.0 L416.3 280.6 L420.6 284.4 L424.7 288.3 L428.7 292.4 L432.5 296.5 L436.3 300.8 L439.9 305.2 L443.4 309.7 L446.7 314.3 L450.0 319.1 L453.1 324.0 L456.0 329.0 L458.9 334.1 L461.6 339.3 L464.2 344.7 L466.6 350.2 L468.9 355.9 L471.1 361.6 L473.2 367.5 L475.1 373.6 L476.9 379.8 L478.5 386.1 L480.0 392.6 L481.4 399.3 L482.6 406.2 L483.7 413.2 L484.6 420.5 L485.4 428.1 L486.1 436.0 L486.6 444.3 L487.0 453.1 L487.2 462.8Z"/></clipPath>
 <filter id="bl1" x="-10%" y="-10%" width="120%" height="120%"><feGaussianBlur stdDeviation="1.2"/></filter>
 <filter id="bl2" x="-10%" y="-10%" width="120%" height="120%"><feGaussianBlur stdDeviation="2"/></filter>
 <filter id="bl4" x="-10%" y="-10%" width="120%" height="120%"><feGaussianBlur stdDeviation="4"/></filter>
 <filter id="bl3" x="-10%" y="-10%" width="120%" height="120%"><feGaussianBlur stdDeviation="3"/></filter>
 <filter id="bl6" x="-10%" y="-10%" width="120%" height="120%"><feGaussianBlur stdDeviation="6"/></filter>
</defs>
<path d="M500.8 475.6 L501.1 491.3 L501.3 502.6 L501.4 512.7 L501.2 522.1 L500.9 530.9 L500.4 539.3 L499.8 547.4 L499.0 555.2 L498.0 562.7 L496.9 570.0 L495.7 577.1 L494.3 584.1 L492.7 590.8 L491.0 597.4 L489.2 603.8 L487.2 610.1 L485.0 616.2 L482.8 622.1 L480.3 627.9 L477.7 633.6 L475.0 639.1 L472.1 644.5 L469.1 649.8 L465.9 654.9 L462.6 659.9 L459.1 664.7 L455.5 669.5 L451.7 674.0 L447.8 678.5 L443.8 682.8 L439.6 686.9 L435.3 691.0 L430.8 694.9 L426.2 698.6 L421.4 702.3 L416.4 705.8 L411.3 709.1 L406.0 712.3 L400.6 715.4 L395.0 718.3 L389.3 721.1 L383.5 723.8 L377.5 726.3 L371.3 728.7 L365.1 730.9 L358.6 733.0 L352.0 735.0 L345.2 736.8 L338.3 738.4 L331.1 740.0 L323.8 741.3 L316.2 742.6 L308.4 743.7 L300.3 744.6 L291.8 745.4 L283.0 746.0 L273.6 746.5 L263.4 746.9 L252.1 747.1 L236.2 747.2 L220.3 747.1 L209.0 746.9 L198.8 746.5 L189.4 746.0 L180.6 745.4 L172.1 744.6 L164.0 743.7 L156.2 742.6 L148.6 741.3 L141.3 740.0 L134.1 738.4 L127.2 736.8 L120.4 735.0 L113.8 733.0 L107.3 730.9 L101.1 728.7 L94.9 726.3 L88.9 723.8 L83.1 721.1 L77.4 718.3 L71.8 715.4 L66.4 712.3 L61.1 709.1 L56.0 705.8 L51.0 702.3 L46.1 698.6 L41.4 694.9 L36.8 691.0 L32.4 686.9 L28.1 682.8 L23.9 678.5 L19.9 674.0 L16.0 669.5 L12.3 664.7 L8.7 659.9 L5.3 654.9 L1.9 649.8 L-1.2 644.5 L-4.3 639.1 L-7.2 633.6 L-9.9 627.9 L-12.5 622.1 L-15.0 616.2 L-17.3 610.1 L-19.5 603.8 L-21.5 597.4 L-23.4 590.8 L-25.1 584.1 L-26.7 577.1 L-28.1 570.0 L-29.4 562.7 L-30.6 555.2 L-31.6 547.4 L-32.4 539.3 L-33.1 530.9 L-33.7 522.1 L-34.1 512.7 L-34.3 502.6 L-34.4 491.3 L-34.4 475.6 L-34.3 462.6 L-34.1 452.7 L-33.7 443.6 L-33.2 435.0 L-32.5 426.8 L-31.6 419.0 L-30.7 411.4 L-29.5 404.0 L-28.2 396.8 L-26.8 389.8 L-25.2 382.9 L-23.5 376.2 L-21.6 369.7 L-19.6 363.3 L-17.4 357.0 L-15.1 350.9 L-12.6 344.9 L-10.0 339.1 L-7.3 333.3 L-4.4 327.7 L-1.3 322.2 L1.8 316.9 L5.2 311.7 L8.6 306.6 L12.2 301.6 L16.0 296.8 L19.8 292.0 L23.8 287.5 L28.0 283.0 L32.3 278.7 L36.7 274.5 L41.2 270.4 L45.9 266.5 L50.7 262.7 L55.7 259.0 L60.7 255.5 L65.9 252.1 L71.3 248.9 L76.7 245.8 L82.3 242.8 L88.0 239.9 L93.9 237.2 L99.9 234.7 L106.0 232.3 L112.2 230.0 L118.6 227.9 L125.1 225.9 L131.8 224.0 L138.7 222.3 L145.6 220.8 L152.8 219.4 L160.1 218.1 L167.7 217.0 L175.4 216.1 L183.5 215.2 L191.8 214.6 L200.5 214.1 L209.8 213.7 L220.0 213.5 L233.2 213.4 L246.4 213.5 L256.6 213.7 L265.9 214.1 L274.6 214.6 L282.9 215.2 L291.0 216.1 L298.7 217.0 L306.3 218.1 L313.6 219.4 L320.8 220.8 L327.7 222.3 L334.6 224.0 L341.3 225.9 L347.8 227.9 L354.2 230.0 L360.4 232.3 L366.5 234.7 L372.5 237.2 L378.4 239.9 L384.1 242.8 L389.7 245.8 L395.1 248.9 L400.5 252.1 L405.7 255.5 L410.7 259.0 L415.7 262.7 L420.5 266.5 L425.2 270.4 L429.7 274.5 L434.1 278.7 L438.4 283.0 L442.6 287.5 L446.6 292.0 L450.4 296.8 L454.2 301.6 L457.8 306.6 L461.2 311.7 L464.6 316.9 L467.7 322.2 L470.8 327.7 L473.7 333.3 L476.4 339.1 L479.0 344.9 L481.5 350.9 L483.8 357.0 L486.0 363.3 L488.0 369.7 L489.9 376.2 L491.6 382.9 L493.2 389.8 L494.6 396.8 L495.9 404.0 L497.1 411.4 L498.0 419.0 L498.9 426.8 L499.6 435.0 L500.1 443.6 L500.5 452.7 L500.7 462.6Z" fill="url(#gA)"/>
<path d="M500.8 475.6 L501.1 491.3 L501.3 502.6 L501.4 512.7 L501.2 522.1 L500.9 530.9 L500.4 539.3 L499.8 547.4 L499.0 555.2 L498.0 562.7 L496.9 570.0 L495.7 577.1 L494.3 584.1 L492.7 590.8 L491.0 597.4 L489.2 603.8 L487.2 610.1 L485.0 616.2 L482.8 622.1 L480.3 627.9 L477.7 633.6 L475.0 639.1 L472.1 644.5 L469.1 649.8 L465.9 654.9 L462.6 659.9 L459.1 664.7 L455.5 669.5 L451.7 674.0 L447.8 678.5 L443.8 682.8 L439.6 686.9 L435.3 691.0 L430.8 694.9 L426.2 698.6 L421.4 702.3 L416.4 705.8 L411.3 709.1 L406.0 712.3 L400.6 715.4 L395.0 718.3 L389.3 721.1 L383.5 723.8 L377.5 726.3 L371.3 728.7 L365.1 730.9 L358.6 733.0 L352.0 735.0 L345.2 736.8 L338.3 738.4 L331.1 740.0 L323.8 741.3 L316.2 742.6 L308.4 743.7 L300.3 744.6 L291.8 745.4 L283.0 746.0 L273.6 746.5 L263.4 746.9 L252.1 747.1 L236.2 747.2 L220.3 747.1 L209.0 746.9 L198.8 746.5 L189.4 746.0 L180.6 745.4 L172.1 744.6 L164.0 743.7 L156.2 742.6 L148.6 741.3 L141.3 740.0 L134.1 738.4 L127.2 736.8 L120.4 735.0 L113.8 733.0 L107.3 730.9 L101.1 728.7 L94.9 726.3 L88.9 723.8 L83.1 721.1 L77.4 718.3 L71.8 715.4 L66.4 712.3 L61.1 709.1 L56.0 705.8 L51.0 702.3 L46.1 698.6 L41.4 694.9 L36.8 691.0 L32.4 686.9 L28.1 682.8 L23.9 678.5 L19.9 674.0 L16.0 669.5 L12.3 664.7 L8.7 659.9 L5.3 654.9 L1.9 649.8 L-1.2 644.5 L-4.3 639.1 L-7.2 633.6 L-9.9 627.9 L-12.5 622.1 L-15.0 616.2 L-17.3 610.1 L-19.5 603.8 L-21.5 597.4 L-23.4 590.8 L-25.1 584.1 L-26.7 577.1 L-28.1 570.0 L-29.4 562.7 L-30.6 555.2 L-31.6 547.4 L-32.4 539.3 L-33.1 530.9 L-33.7 522.1 L-34.1 512.7 L-34.3 502.6 L-34.4 491.3 L-34.4 475.6 L-34.3 462.6 L-34.1 452.7 L-33.7 443.6 L-33.2 435.0 L-32.5 426.8 L-31.6 419.0 L-30.7 411.4 L-29.5 404.0 L-28.2 396.8 L-26.8 389.8 L-25.2 382.9 L-23.5 376.2 L-21.6 369.7 L-19.6 363.3 L-17.4 357.0 L-15.1 350.9 L-12.6 344.9 L-10.0 339.1 L-7.3 333.3 L-4.4 327.7 L-1.3 322.2 L1.8 316.9 L5.2 311.7 L8.6 306.6 L12.2 301.6 L16.0 296.8 L19.8 292.0 L23.8 287.5 L28.0 283.0 L32.3 278.7 L36.7 274.5 L41.2 270.4 L45.9 266.5 L50.7 262.7 L55.7 259.0 L60.7 255.5 L65.9 252.1 L71.3 248.9 L76.7 245.8 L82.3 242.8 L88.0 239.9 L93.9 237.2 L99.9 234.7 L106.0 232.3 L112.2 230.0 L118.6 227.9 L125.1 225.9 L131.8 224.0 L138.7 222.3 L145.6 220.8 L152.8 219.4 L160.1 218.1 L167.7 217.0 L175.4 216.1 L183.5 215.2 L191.8 214.6 L200.5 214.1 L209.8 213.7 L220.0 213.5 L233.2 213.4 L246.4 213.5 L256.6 213.7 L265.9 214.1 L274.6 214.6 L282.9 215.2 L291.0 216.1 L298.7 217.0 L306.3 218.1 L313.6 219.4 L320.8 220.8 L327.7 222.3 L334.6 224.0 L341.3 225.9 L347.8 227.9 L354.2 230.0 L360.4 232.3 L366.5 234.7 L372.5 237.2 L378.4 239.9 L384.1 242.8 L389.7 245.8 L395.1 248.9 L400.5 252.1 L405.7 255.5 L410.7 259.0 L415.7 262.7 L420.5 266.5 L425.2 270.4 L429.7 274.5 L434.1 278.7 L438.4 283.0 L442.6 287.5 L446.6 292.0 L450.4 296.8 L454.2 301.6 L457.8 306.6 L461.2 311.7 L464.6 316.9 L467.7 322.2 L470.8 327.7 L473.7 333.3 L476.4 339.1 L479.0 344.9 L481.5 350.9 L483.8 357.0 L486.0 363.3 L488.0 369.7 L489.9 376.2 L491.6 382.9 L493.2 389.8 L494.6 396.8 L495.9 404.0 L497.1 411.4 L498.0 419.0 L498.9 426.8 L499.6 435.0 L500.1 443.6 L500.5 452.7 L500.7 462.6Z" fill="none" stroke="url(#gAs)" stroke-width="2"/>
<path d="M487.3 475.7 L487.6 491.6 L487.8 502.8 L487.9 512.6 L487.7 521.7 L487.4 530.3 L486.9 538.4 L486.3 546.2 L485.6 553.7 L484.7 560.9 L483.6 567.9 L482.4 574.6 L481.1 581.2 L479.6 587.6 L478.0 593.8 L476.3 599.9 L474.4 605.8 L472.4 611.5 L470.2 617.1 L467.9 622.5 L465.5 627.8 L463.0 633.0 L460.3 638.0 L457.5 642.9 L454.5 647.6 L451.4 652.2 L448.2 656.7 L444.9 661.1 L441.4 665.3 L437.8 669.4 L434.1 673.4 L430.2 677.2 L426.2 681.0 L422.1 684.6 L417.8 688.0 L413.5 691.4 L408.8 694.6 L404.1 697.7 L399.1 700.7 L394.1 703.6 L388.9 706.3 L383.5 708.9 L378.1 711.4 L372.4 713.8 L366.6 716.0 L360.7 718.1 L354.6 720.1 L348.4 722.0 L341.9 723.7 L335.3 725.3 L328.5 726.7 L321.5 728.0 L314.2 729.2 L306.7 730.3 L298.9 731.2 L290.7 731.9 L282.1 732.6 L273.0 733.0 L263.1 733.4 L251.9 733.6 L236.2 733.7 L220.5 733.6 L209.3 733.4 L199.4 733.0 L190.3 732.6 L181.7 731.9 L173.5 731.2 L165.7 730.3 L158.2 729.2 L150.9 728.0 L143.9 726.7 L137.1 725.3 L130.5 723.7 L124.0 722.0 L117.8 720.1 L111.7 718.1 L105.8 716.0 L100.0 713.8 L94.3 711.4 L88.9 708.9 L83.5 706.3 L78.3 703.6 L73.3 700.7 L68.3 697.7 L63.6 694.6 L58.9 691.3 L54.4 688.0 L50.0 684.5 L45.8 680.8 L41.7 677.1 L37.7 673.2 L33.8 669.2 L30.1 665.1 L26.5 660.9 L23.0 656.5 L19.7 652.0 L16.5 647.4 L13.4 642.6 L10.4 637.7 L7.6 632.7 L4.9 627.5 L2.3 622.2 L-0.1 616.8 L-2.4 611.2 L-4.6 605.5 L-6.6 599.6 L-8.5 593.5 L-10.3 587.3 L-12.0 580.9 L-13.5 574.3 L-14.9 567.5 L-16.1 560.5 L-17.2 553.3 L-18.1 545.8 L-19.0 538.0 L-19.6 529.9 L-20.2 521.3 L-20.6 512.3 L-20.8 502.4 L-20.9 491.3 L-20.9 475.6 L-20.8 462.8 L-20.6 453.1 L-20.2 444.3 L-19.7 436.0 L-19.0 428.1 L-18.2 420.5 L-17.3 413.2 L-16.2 406.2 L-15.0 399.3 L-13.6 392.6 L-12.1 386.1 L-10.5 379.8 L-8.7 373.6 L-6.8 367.5 L-4.7 361.6 L-2.5 355.9 L-0.2 350.2 L2.2 344.7 L4.8 339.3 L7.5 334.1 L10.4 329.0 L13.3 324.0 L16.4 319.1 L19.7 314.3 L23.0 309.7 L26.5 305.2 L30.1 300.8 L33.9 296.5 L37.7 292.4 L41.7 288.3 L45.8 284.4 L50.1 280.6 L54.4 277.0 L58.9 273.4 L63.5 270.0 L68.3 266.7 L73.1 263.5 L78.1 260.5 L83.2 257.6 L88.5 254.8 L93.9 252.1 L99.4 249.6 L105.0 247.2 L110.8 244.9 L116.7 242.7 L122.7 240.7 L128.9 238.8 L135.2 237.1 L141.7 235.5 L148.4 234.0 L155.2 232.7 L162.3 231.5 L169.5 230.4 L177.0 229.5 L184.7 228.7 L192.7 228.0 L201.2 227.5 L210.2 227.2 L220.2 227.0 L233.2 226.9 L246.2 227.0 L256.2 227.2 L265.2 227.5 L273.7 228.0 L281.7 228.7 L289.4 229.5 L296.9 230.4 L304.1 231.5 L311.2 232.7 L318.0 234.0 L324.7 235.5 L331.2 237.1 L337.5 238.8 L343.7 240.7 L349.7 242.7 L355.6 244.9 L361.4 247.2 L367.0 249.6 L372.5 252.1 L377.9 254.8 L383.2 257.6 L388.3 260.5 L393.3 263.5 L398.1 266.7 L402.9 270.0 L407.5 273.4 L412.0 277.0 L416.3 280.6 L420.6 284.4 L424.7 288.3 L428.7 292.4 L432.5 296.5 L436.3 300.8 L439.9 305.2 L443.4 309.7 L446.7 314.3 L450.0 319.1 L453.1 324.0 L456.0 329.0 L458.9 334.1 L461.6 339.3 L464.2 344.7 L466.6 350.2 L468.9 355.9 L471.1 361.6 L473.2 367.5 L475.1 373.6 L476.9 379.8 L478.5 386.1 L480.0 392.6 L481.4 399.3 L482.6 406.2 L483.7 413.2 L484.6 420.5 L485.4 428.1 L486.1 436.0 L486.6 444.3 L487.0 453.1 L487.2 462.8Z" fill="none" stroke="url(#gBh)" stroke-width="10" filter="url(#bl2)" clip-path="url(#cA)"/>
<path d="M487.3 475.7 L487.6 491.6 L487.8 502.8 L487.9 512.6 L487.7 521.7 L487.4 530.3 L486.9 538.4 L486.3 546.2 L485.6 553.7 L484.7 560.9 L483.6 567.9 L482.4 574.6 L481.1 581.2 L479.6 587.6 L478.0 593.8 L476.3 599.9 L474.4 605.8 L472.4 611.5 L470.2 617.1 L467.9 622.5 L465.5 627.8 L463.0 633.0 L460.3 638.0 L457.5 642.9 L454.5 647.6 L451.4 652.2 L448.2 656.7 L444.9 661.1 L441.4 665.3 L437.8 669.4 L434.1 673.4 L430.2 677.2 L426.2 681.0 L422.1 684.6 L417.8 688.0 L413.5 691.4 L408.8 694.6 L404.1 697.7 L399.1 700.7 L394.1 703.6 L388.9 706.3 L383.5 708.9 L378.1 711.4 L372.4 713.8 L366.6 716.0 L360.7 718.1 L354.6 720.1 L348.4 722.0 L341.9 723.7 L335.3 725.3 L328.5 726.7 L321.5 728.0 L314.2 729.2 L306.7 730.3 L298.9 731.2 L290.7 731.9 L282.1 732.6 L273.0 733.0 L263.1 733.4 L251.9 733.6 L236.2 733.7 L220.5 733.6 L209.3 733.4 L199.4 733.0 L190.3 732.6 L181.7 731.9 L173.5 731.2 L165.7 730.3 L158.2 729.2 L150.9 728.0 L143.9 726.7 L137.1 725.3 L130.5 723.7 L124.0 722.0 L117.8 720.1 L111.7 718.1 L105.8 716.0 L100.0 713.8 L94.3 711.4 L88.9 708.9 L83.5 706.3 L78.3 703.6 L73.3 700.7 L68.3 697.7 L63.6 694.6 L58.9 691.3 L54.4 688.0 L50.0 684.5 L45.8 680.8 L41.7 677.1 L37.7 673.2 L33.8 669.2 L30.1 665.1 L26.5 660.9 L23.0 656.5 L19.7 652.0 L16.5 647.4 L13.4 642.6 L10.4 637.7 L7.6 632.7 L4.9 627.5 L2.3 622.2 L-0.1 616.8 L-2.4 611.2 L-4.6 605.5 L-6.6 599.6 L-8.5 593.5 L-10.3 587.3 L-12.0 580.9 L-13.5 574.3 L-14.9 567.5 L-16.1 560.5 L-17.2 553.3 L-18.1 545.8 L-19.0 538.0 L-19.6 529.9 L-20.2 521.3 L-20.6 512.3 L-20.8 502.4 L-20.9 491.3 L-20.9 475.6 L-20.8 462.8 L-20.6 453.1 L-20.2 444.3 L-19.7 436.0 L-19.0 428.1 L-18.2 420.5 L-17.3 413.2 L-16.2 406.2 L-15.0 399.3 L-13.6 392.6 L-12.1 386.1 L-10.5 379.8 L-8.7 373.6 L-6.8 367.5 L-4.7 361.6 L-2.5 355.9 L-0.2 350.2 L2.2 344.7 L4.8 339.3 L7.5 334.1 L10.4 329.0 L13.3 324.0 L16.4 319.1 L19.7 314.3 L23.0 309.7 L26.5 305.2 L30.1 300.8 L33.9 296.5 L37.7 292.4 L41.7 288.3 L45.8 284.4 L50.1 280.6 L54.4 277.0 L58.9 273.4 L63.5 270.0 L68.3 266.7 L73.1 263.5 L78.1 260.5 L83.2 257.6 L88.5 254.8 L93.9 252.1 L99.4 249.6 L105.0 247.2 L110.8 244.9 L116.7 242.7 L122.7 240.7 L128.9 238.8 L135.2 237.1 L141.7 235.5 L148.4 234.0 L155.2 232.7 L162.3 231.5 L169.5 230.4 L177.0 229.5 L184.7 228.7 L192.7 228.0 L201.2 227.5 L210.2 227.2 L220.2 227.0 L233.2 226.9 L246.2 227.0 L256.2 227.2 L265.2 227.5 L273.7 228.0 L281.7 228.7 L289.4 229.5 L296.9 230.4 L304.1 231.5 L311.2 232.7 L318.0 234.0 L324.7 235.5 L331.2 237.1 L337.5 238.8 L343.7 240.7 L349.7 242.7 L355.6 244.9 L361.4 247.2 L367.0 249.6 L372.5 252.1 L377.9 254.8 L383.2 257.6 L388.3 260.5 L393.3 263.5 L398.1 266.7 L402.9 270.0 L407.5 273.4 L412.0 277.0 L416.3 280.6 L420.6 284.4 L424.7 288.3 L428.7 292.4 L432.5 296.5 L436.3 300.8 L439.9 305.2 L443.4 309.7 L446.7 314.3 L450.0 319.1 L453.1 324.0 L456.0 329.0 L458.9 334.1 L461.6 339.3 L464.2 344.7 L466.6 350.2 L468.9 355.9 L471.1 361.6 L473.2 367.5 L475.1 373.6 L476.9 379.8 L478.5 386.1 L480.0 392.6 L481.4 399.3 L482.6 406.2 L483.7 413.2 L484.6 420.5 L485.4 428.1 L486.1 436.0 L486.6 444.3 L487.0 453.1 L487.2 462.8Z" fill="none" stroke="url(#gBt)" stroke-width="8" filter="url(#bl2)" clip-path="url(#cA)"/>
<path d="M487.3 475.7 L487.6 491.6 L487.8 502.8 L487.9 512.6 L487.7 521.7 L487.4 530.3 L486.9 538.4 L486.3 546.2 L485.6 553.7 L484.7 560.9 L483.6 567.9 L482.4 574.6 L481.1 581.2 L479.6 587.6 L478.0 593.8 L476.3 599.9 L474.4 605.8 L472.4 611.5 L470.2 617.1 L467.9 622.5 L465.5 627.8 L463.0 633.0 L460.3 638.0 L457.5 642.9 L454.5 647.6 L451.4 652.2 L448.2 656.7 L444.9 661.1 L441.4 665.3 L437.8 669.4 L434.1 673.4 L430.2 677.2 L426.2 681.0 L422.1 684.6 L417.8 688.0 L413.5 691.4 L408.8 694.6 L404.1 697.7 L399.1 700.7 L394.1 703.6 L388.9 706.3 L383.5 708.9 L378.1 711.4 L372.4 713.8 L366.6 716.0 L360.7 718.1 L354.6 720.1 L348.4 722.0 L341.9 723.7 L335.3 725.3 L328.5 726.7 L321.5 728.0 L314.2 729.2 L306.7 730.3 L298.9 731.2 L290.7 731.9 L282.1 732.6 L273.0 733.0 L263.1 733.4 L251.9 733.6 L236.2 733.7 L220.5 733.6 L209.3 733.4 L199.4 733.0 L190.3 732.6 L181.7 731.9 L173.5 731.2 L165.7 730.3 L158.2 729.2 L150.9 728.0 L143.9 726.7 L137.1 725.3 L130.5 723.7 L124.0 722.0 L117.8 720.1 L111.7 718.1 L105.8 716.0 L100.0 713.8 L94.3 711.4 L88.9 708.9 L83.5 706.3 L78.3 703.6 L73.3 700.7 L68.3 697.7 L63.6 694.6 L58.9 691.3 L54.4 688.0 L50.0 684.5 L45.8 680.8 L41.7 677.1 L37.7 673.2 L33.8 669.2 L30.1 665.1 L26.5 660.9 L23.0 656.5 L19.7 652.0 L16.5 647.4 L13.4 642.6 L10.4 637.7 L7.6 632.7 L4.9 627.5 L2.3 622.2 L-0.1 616.8 L-2.4 611.2 L-4.6 605.5 L-6.6 599.6 L-8.5 593.5 L-10.3 587.3 L-12.0 580.9 L-13.5 574.3 L-14.9 567.5 L-16.1 560.5 L-17.2 553.3 L-18.1 545.8 L-19.0 538.0 L-19.6 529.9 L-20.2 521.3 L-20.6 512.3 L-20.8 502.4 L-20.9 491.3 L-20.9 475.6 L-20.8 462.8 L-20.6 453.1 L-20.2 444.3 L-19.7 436.0 L-19.0 428.1 L-18.2 420.5 L-17.3 413.2 L-16.2 406.2 L-15.0 399.3 L-13.6 392.6 L-12.1 386.1 L-10.5 379.8 L-8.7 373.6 L-6.8 367.5 L-4.7 361.6 L-2.5 355.9 L-0.2 350.2 L2.2 344.7 L4.8 339.3 L7.5 334.1 L10.4 329.0 L13.3 324.0 L16.4 319.1 L19.7 314.3 L23.0 309.7 L26.5 305.2 L30.1 300.8 L33.9 296.5 L37.7 292.4 L41.7 288.3 L45.8 284.4 L50.1 280.6 L54.4 277.0 L58.9 273.4 L63.5 270.0 L68.3 266.7 L73.1 263.5 L78.1 260.5 L83.2 257.6 L88.5 254.8 L93.9 252.1 L99.4 249.6 L105.0 247.2 L110.8 244.9 L116.7 242.7 L122.7 240.7 L128.9 238.8 L135.2 237.1 L141.7 235.5 L148.4 234.0 L155.2 232.7 L162.3 231.5 L169.5 230.4 L177.0 229.5 L184.7 228.7 L192.7 228.0 L201.2 227.5 L210.2 227.2 L220.2 227.0 L233.2 226.9 L246.2 227.0 L256.2 227.2 L265.2 227.5 L273.7 228.0 L281.7 228.7 L289.4 229.5 L296.9 230.4 L304.1 231.5 L311.2 232.7 L318.0 234.0 L324.7 235.5 L331.2 237.1 L337.5 238.8 L343.7 240.7 L349.7 242.7 L355.6 244.9 L361.4 247.2 L367.0 249.6 L372.5 252.1 L377.9 254.8 L383.2 257.6 L388.3 260.5 L393.3 263.5 L398.1 266.7 L402.9 270.0 L407.5 273.4 L412.0 277.0 L416.3 280.6 L420.6 284.4 L424.7 288.3 L428.7 292.4 L432.5 296.5 L436.3 300.8 L439.9 305.2 L443.4 309.7 L446.7 314.3 L450.0 319.1 L453.1 324.0 L456.0 329.0 L458.9 334.1 L461.6 339.3 L464.2 344.7 L466.6 350.2 L468.9 355.9 L471.1 361.6 L473.2 367.5 L475.1 373.6 L476.9 379.8 L478.5 386.1 L480.0 392.6 L481.4 399.3 L482.6 406.2 L483.7 413.2 L484.6 420.5 L485.4 428.1 L486.1 436.0 L486.6 444.3 L487.0 453.1 L487.2 462.8Z" fill="url(#gB)"/>
<g clip-path="url(#cB)">
<path d="M472.4 497.3 L472.4 510.1 L472.2 519.3 L471.9 527.5 L471.4 535.2 L470.9 542.4 L470.2 549.2 L469.3 555.8 L468.4 562.2 L467.3 568.4 L466.1 574.4 L464.8 580.2 L463.3 585.9 L461.7 591.4 L460.0 596.8 L458.2 602.0 L456.3 607.2 L454.2 612.2 L452.0 617.1 L449.7 621.8 L447.2 626.5 L444.7 631.0 L442.0 635.4 L439.2 639.7 L436.3 643.9 L433.2 648.0 L430.0 652.0 L426.8 655.9 L423.4 659.6 L419.8 663.3 L416.2 666.8 L412.5 670.2 L408.6 673.6 L404.6 676.8 L400.5 679.8 L396.3 682.8 L391.9 685.7 L387.5 688.4 L382.9 691.1 L378.2 693.6 L373.4 696.0 L368.4 698.3 L363.4 700.5 L358.2 702.6 L352.9 704.5 L347.4 706.4 L341.8 708.1 L336.1 709.7 L330.2 711.2 L324.2 712.5 L318.0 713.8 L311.7 714.9 L305.1 715.9 L298.3 716.8 L291.3 717.6 L284.0 718.3 L276.4 718.8 L268.3 719.2 L259.5 719.5 L249.7 719.7 L236.2 719.8 L222.6 719.7 L212.8 719.5 L204.1 719.2 L196.0 718.8 L188.3 718.3 L181.0 717.6 L174.0 716.8 L167.3 715.9 L160.7 714.9 L154.3 713.8 L148.1 712.5 L142.1 711.2 L136.3 709.7 L130.5 708.1 L125.0 706.4 L119.5 704.5 L114.2 702.6 L109.0 700.5 L103.9 698.3 L99.0 696.0 L94.2 693.6 L89.5 691.1 L84.9 688.4 L80.4 685.7 L76.1 682.8 L71.9 679.8 L67.8 676.8 L63.8 673.6 L59.9 670.2 L56.2 666.8 L52.5 663.3 L49.0 659.6 L45.6 655.9 L42.3 652.0 L39.1 648.0 L36.1 643.9 L33.2 639.7 L30.4 635.4 L27.7 631.0 L25.1 626.5 L22.7 621.8 L20.4 617.1 L18.2 612.2 L16.1 607.2 L14.1 602.0 L12.3 596.8 L10.6 591.4 L9.0 585.9 L7.6 580.2 L6.3 574.4 L5.1 568.4 L4.0 562.2 L3.0 555.8 L2.2 549.2 L1.5 542.4 L0.9 535.2 L0.5 527.5 L0.2 519.3 L-0.0 510.1 L-0.1 497.3 L-0.0 483.4 L0.2 473.2 L0.5 464.0 L1.0 455.5 L1.5 447.3 L2.2 439.6 L3.1 432.1 L4.0 424.9 L5.1 417.9 L6.4 411.1 L7.7 404.5 L9.2 398.0 L10.8 391.7 L12.5 385.6 L14.4 379.6 L16.3 373.7 L18.4 368.0 L20.7 362.4 L23.0 357.0 L25.5 351.6 L28.1 346.4 L30.8 341.4 L33.7 336.4 L36.6 331.6 L39.7 326.9 L42.9 322.3 L46.2 317.9 L49.7 313.6 L53.3 309.4 L56.9 305.3 L60.7 301.4 L64.6 297.5 L68.7 293.9 L72.8 290.3 L77.1 286.9 L81.5 283.6 L86.0 280.4 L90.6 277.3 L95.3 274.4 L100.2 271.6 L105.2 269.0 L110.3 266.5 L115.5 264.1 L120.8 261.8 L126.3 259.7 L131.9 257.7 L137.6 255.9 L143.5 254.1 L149.5 252.6 L155.7 251.1 L162.1 249.8 L168.6 248.6 L175.3 247.6 L182.3 246.7 L189.5 246.0 L197.1 245.3 L205.1 244.9 L213.7 244.5 L223.2 244.3 L236.2 244.2 L249.1 244.3 L258.7 244.5 L267.3 244.9 L275.3 245.3 L282.8 246.0 L290.1 246.7 L297.0 247.6 L303.8 248.6 L310.3 249.8 L316.7 251.1 L322.8 252.6 L328.9 254.1 L334.7 255.9 L340.5 257.7 L346.1 259.7 L351.5 261.8 L356.9 264.1 L362.1 266.5 L367.2 269.0 L372.2 271.6 L377.0 274.4 L381.8 277.3 L386.4 280.4 L390.9 283.6 L395.3 286.9 L399.5 290.3 L403.7 293.9 L407.7 297.5 L411.6 301.4 L415.4 305.3 L419.1 309.4 L422.7 313.6 L426.1 317.9 L429.4 322.3 L432.6 326.9 L435.7 331.6 L438.7 336.4 L441.5 341.4 L444.3 346.4 L446.9 351.6 L449.3 357.0 L451.7 362.4 L453.9 368.0 L456.0 373.7 L458.0 379.6 L459.8 385.6 L461.6 391.7 L463.2 398.0 L464.7 404.5 L466.0 411.1 L467.2 417.9 L468.3 424.9 L469.3 432.1 L470.1 439.6 L470.8 447.3 L471.4 455.5 L471.9 464.0 L472.2 473.2 L472.4 483.4Z" fill="none" stroke="url(#gFs)" stroke-width="18" filter="url(#bl4)"/>
<path d="M487.3 475.7 L487.6 491.6 L487.8 502.8 L487.9 512.6 L487.7 521.7 L487.4 530.3 L486.9 538.4 L486.3 546.2 L485.6 553.7 L484.7 560.9 L483.6 567.9 L482.4 574.6 L481.1 581.2 L479.6 587.6 L478.0 593.8 L476.3 599.9 L474.4 605.8 L472.4 611.5 L470.2 617.1 L467.9 622.5 L465.5 627.8 L463.0 633.0 L460.3 638.0 L457.5 642.9 L454.5 647.6 L451.4 652.2 L448.2 656.7 L444.9 661.1 L441.4 665.3 L437.8 669.4 L434.1 673.4 L430.2 677.2 L426.2 681.0 L422.1 684.6 L417.8 688.0 L413.5 691.4 L408.8 694.6 L404.1 697.7 L399.1 700.7 L394.1 703.6 L388.9 706.3 L383.5 708.9 L378.1 711.4 L372.4 713.8 L366.6 716.0 L360.7 718.1 L354.6 720.1 L348.4 722.0 L341.9 723.7 L335.3 725.3 L328.5 726.7 L321.5 728.0 L314.2 729.2 L306.7 730.3 L298.9 731.2 L290.7 731.9 L282.1 732.6 L273.0 733.0 L263.1 733.4 L251.9 733.6 L236.2 733.7 L220.5 733.6 L209.3 733.4 L199.4 733.0 L190.3 732.6 L181.7 731.9 L173.5 731.2 L165.7 730.3 L158.2 729.2 L150.9 728.0 L143.9 726.7 L137.1 725.3 L130.5 723.7 L124.0 722.0 L117.8 720.1 L111.7 718.1 L105.8 716.0 L100.0 713.8 L94.3 711.4 L88.9 708.9 L83.5 706.3 L78.3 703.6 L73.3 700.7 L68.3 697.7 L63.6 694.6 L58.9 691.3 L54.4 688.0 L50.0 684.5 L45.8 680.8 L41.7 677.1 L37.7 673.2 L33.8 669.2 L30.1 665.1 L26.5 660.9 L23.0 656.5 L19.7 652.0 L16.5 647.4 L13.4 642.6 L10.4 637.7 L7.6 632.7 L4.9 627.5 L2.3 622.2 L-0.1 616.8 L-2.4 611.2 L-4.6 605.5 L-6.6 599.6 L-8.5 593.5 L-10.3 587.3 L-12.0 580.9 L-13.5 574.3 L-14.9 567.5 L-16.1 560.5 L-17.2 553.3 L-18.1 545.8 L-19.0 538.0 L-19.6 529.9 L-20.2 521.3 L-20.6 512.3 L-20.8 502.4 L-20.9 491.3 L-20.9 475.6 L-20.8 462.8 L-20.6 453.1 L-20.2 444.3 L-19.7 436.0 L-19.0 428.1 L-18.2 420.5 L-17.3 413.2 L-16.2 406.2 L-15.0 399.3 L-13.6 392.6 L-12.1 386.1 L-10.5 379.8 L-8.7 373.6 L-6.8 367.5 L-4.7 361.6 L-2.5 355.9 L-0.2 350.2 L2.2 344.7 L4.8 339.3 L7.5 334.1 L10.4 329.0 L13.3 324.0 L16.4 319.1 L19.7 314.3 L23.0 309.7 L26.5 305.2 L30.1 300.8 L33.9 296.5 L37.7 292.4 L41.7 288.3 L45.8 284.4 L50.1 280.6 L54.4 277.0 L58.9 273.4 L63.5 270.0 L68.3 266.7 L73.1 263.5 L78.1 260.5 L83.2 257.6 L88.5 254.8 L93.9 252.1 L99.4 249.6 L105.0 247.2 L110.8 244.9 L116.7 242.7 L122.7 240.7 L128.9 238.8 L135.2 237.1 L141.7 235.5 L148.4 234.0 L155.2 232.7 L162.3 231.5 L169.5 230.4 L177.0 229.5 L184.7 228.7 L192.7 228.0 L201.2 227.5 L210.2 227.2 L220.2 227.0 L233.2 226.9 L246.2 227.0 L256.2 227.2 L265.2 227.5 L273.7 228.0 L281.7 228.7 L289.4 229.5 L296.9 230.4 L304.1 231.5 L311.2 232.7 L318.0 234.0 L324.7 235.5 L331.2 237.1 L337.5 238.8 L343.7 240.7 L349.7 242.7 L355.6 244.9 L361.4 247.2 L367.0 249.6 L372.5 252.1 L377.9 254.8 L383.2 257.6 L388.3 260.5 L393.3 263.5 L398.1 266.7 L402.9 270.0 L407.5 273.4 L412.0 277.0 L416.3 280.6 L420.6 284.4 L424.7 288.3 L428.7 292.4 L432.5 296.5 L436.3 300.8 L439.9 305.2 L443.4 309.7 L446.7 314.3 L450.0 319.1 L453.1 324.0 L456.0 329.0 L458.9 334.1 L461.6 339.3 L464.2 344.7 L466.6 350.2 L468.9 355.9 L471.1 361.6 L473.2 367.5 L475.1 373.6 L476.9 379.8 L478.5 386.1 L480.0 392.6 L481.4 399.3 L482.6 406.2 L483.7 413.2 L484.6 420.5 L485.4 428.1 L486.1 436.0 L486.6 444.3 L487.0 453.1 L487.2 462.8Z" fill="none" stroke="url(#gBs)" stroke-width="5"/>
</g>
<path d="M473.3 475.8 L473.6 492.0 L473.8 502.9 L473.9 512.5 L473.7 521.3 L473.4 529.6 L473.0 537.4 L472.4 544.9 L471.7 552.1 L470.8 559.0 L469.8 565.6 L468.7 572.0 L467.4 578.3 L466.0 584.3 L464.5 590.1 L462.9 595.8 L461.1 601.3 L459.2 606.7 L457.2 611.9 L455.1 616.9 L452.9 621.8 L450.5 626.6 L448.1 631.2 L445.5 635.7 L442.8 640.0 L439.9 644.3 L437.0 648.4 L433.9 652.4 L430.7 656.2 L427.5 660.0 L424.0 663.6 L420.5 667.1 L416.8 670.6 L413.0 673.9 L409.1 677.1 L405.2 680.0 L401.0 683.0 L396.6 685.9 L392.0 688.6 L387.3 691.3 L382.5 693.8 L377.5 696.3 L372.4 698.6 L367.2 700.8 L361.8 702.9 L356.2 704.9 L350.5 706.8 L344.6 708.5 L338.5 710.1 L332.2 711.6 L325.7 713.0 L319.0 714.3 L312.1 715.4 L304.9 716.4 L297.4 717.2 L289.5 718.0 L281.2 718.6 L272.3 719.1 L262.7 719.4 L251.7 719.6 L236.2 719.7 L220.7 719.6 L209.7 719.4 L200.1 719.1 L191.2 718.6 L182.9 718.0 L175.0 717.2 L167.5 716.4 L160.3 715.4 L153.4 714.3 L146.7 713.0 L140.2 711.6 L133.9 710.1 L127.8 708.5 L121.9 706.8 L116.2 704.9 L110.6 702.9 L105.2 700.8 L100.0 698.6 L94.9 696.3 L89.9 693.8 L85.1 691.3 L80.4 688.6 L75.8 685.9 L71.4 683.0 L67.1 680.0 L62.9 676.9 L58.9 673.7 L55.0 670.3 L51.2 666.9 L47.6 663.4 L44.0 659.7 L40.6 655.9 L37.3 652.0 L34.1 648.0 L31.0 643.9 L28.1 639.6 L25.2 635.2 L22.5 630.7 L19.9 626.0 L17.4 621.3 L15.0 616.3 L12.8 611.3 L10.6 606.1 L8.6 600.7 L6.7 595.2 L4.9 589.5 L3.2 583.6 L1.6 577.6 L0.2 571.4 L-1.1 564.9 L-2.3 558.3 L-3.3 551.4 L-4.2 544.2 L-5.0 536.7 L-5.7 528.9 L-6.2 520.6 L-6.6 511.8 L-6.8 502.2 L-6.9 491.3 L-6.9 475.6 L-6.8 463.0 L-6.6 453.5 L-6.2 445.0 L-5.7 437.0 L-5.1 429.4 L-4.3 422.2 L-3.4 415.2 L-2.4 408.5 L-1.2 401.9 L0.1 395.6 L1.5 389.5 L3.0 383.5 L4.7 377.6 L6.5 372.0 L8.4 366.4 L10.5 361.0 L12.6 355.7 L14.9 350.6 L17.3 345.6 L19.9 340.7 L22.5 335.9 L25.3 331.3 L28.1 326.8 L31.1 322.4 L34.2 318.1 L37.5 313.9 L40.8 309.8 L44.3 305.9 L47.8 302.1 L51.5 298.3 L55.3 294.7 L59.2 291.2 L63.3 287.8 L67.4 284.5 L71.7 281.4 L76.1 278.3 L80.6 275.4 L85.2 272.5 L90.0 269.8 L94.9 267.2 L99.9 264.7 L105.0 262.4 L110.3 260.1 L115.7 258.0 L121.3 256.0 L127.0 254.1 L132.8 252.3 L138.8 250.6 L144.9 249.1 L151.3 247.7 L157.8 246.4 L164.5 245.3 L171.4 244.3 L178.5 243.4 L186.0 242.6 L193.7 242.0 L201.9 241.5 L210.7 241.2 L220.4 241.0 L233.2 240.9 L246.0 241.0 L255.7 241.2 L264.5 241.5 L272.7 242.0 L280.4 242.6 L287.9 243.4 L295.0 244.3 L301.9 245.3 L308.6 246.4 L315.1 247.7 L321.5 249.1 L327.6 250.6 L333.6 252.3 L339.4 254.1 L345.1 256.0 L350.7 258.0 L356.1 260.1 L361.4 262.4 L366.5 264.7 L371.5 267.2 L376.4 269.8 L381.2 272.5 L385.8 275.4 L390.3 278.3 L394.7 281.4 L399.0 284.5 L403.1 287.8 L407.2 291.2 L411.1 294.7 L414.9 298.3 L418.6 302.1 L422.1 305.9 L425.6 309.8 L428.9 313.9 L432.2 318.1 L435.3 322.4 L438.3 326.8 L441.1 331.3 L443.9 335.9 L446.5 340.7 L449.1 345.6 L451.5 350.6 L453.8 355.7 L455.9 361.0 L458.0 366.4 L459.9 372.0 L461.7 377.6 L463.4 383.5 L464.9 389.5 L466.3 395.6 L467.6 401.9 L468.8 408.5 L469.8 415.2 L470.7 422.2 L471.5 429.4 L472.1 437.0 L472.6 445.0 L473.0 453.5 L473.2 463.0Z" fill="url(#gC)"/>
<g clip-path="url(#cF)">
<path d="M472.4 497.3 L472.4 510.1 L472.2 519.3 L471.9 527.5 L471.4 535.2 L470.9 542.4 L470.2 549.2 L469.3 555.8 L468.4 562.2 L467.3 568.4 L466.1 574.4 L464.8 580.2 L463.3 585.9 L461.7 591.4 L460.0 596.8 L458.2 602.0 L456.3 607.2 L454.2 612.2 L452.0 617.1 L449.7 621.8 L447.2 626.5 L444.7 631.0 L442.0 635.4 L439.2 639.7 L436.3 643.9 L433.2 648.0 L430.0 652.0 L426.8 655.9 L423.4 659.6 L419.8 663.3 L416.2 666.8 L412.5 670.2 L408.6 673.6 L404.6 676.8 L400.5 679.8 L396.3 682.8 L391.9 685.7 L387.5 688.4 L382.9 691.1 L378.2 693.6 L373.4 696.0 L368.4 698.3 L363.4 700.5 L358.2 702.6 L352.9 704.5 L347.4 706.4 L341.8 708.1 L336.1 709.7 L330.2 711.2 L324.2 712.5 L318.0 713.8 L311.7 714.9 L305.1 715.9 L298.3 716.8 L291.3 717.6 L284.0 718.3 L276.4 718.8 L268.3 719.2 L259.5 719.5 L249.7 719.7 L236.2 719.8 L222.6 719.7 L212.8 719.5 L204.1 719.2 L196.0 718.8 L188.3 718.3 L181.0 717.6 L174.0 716.8 L167.3 715.9 L160.7 714.9 L154.3 713.8 L148.1 712.5 L142.1 711.2 L136.3 709.7 L130.5 708.1 L125.0 706.4 L119.5 704.5 L114.2 702.6 L109.0 700.5 L103.9 698.3 L99.0 696.0 L94.2 693.6 L89.5 691.1 L84.9 688.4 L80.4 685.7 L76.1 682.8 L71.9 679.8 L67.8 676.8 L63.8 673.6 L59.9 670.2 L56.2 666.8 L52.5 663.3 L49.0 659.6 L45.6 655.9 L42.3 652.0 L39.1 648.0 L36.1 643.9 L33.2 639.7 L30.4 635.4 L27.7 631.0 L25.1 626.5 L22.7 621.8 L20.4 617.1 L18.2 612.2 L16.1 607.2 L14.1 602.0 L12.3 596.8 L10.6 591.4 L9.0 585.9 L7.6 580.2 L6.3 574.4 L5.1 568.4 L4.0 562.2 L3.0 555.8 L2.2 549.2 L1.5 542.4 L0.9 535.2 L0.5 527.5 L0.2 519.3 L-0.0 510.1 L-0.1 497.3 L-0.0 483.4 L0.2 473.2 L0.5 464.0 L1.0 455.5 L1.5 447.3 L2.2 439.6 L3.1 432.1 L4.0 424.9 L5.1 417.9 L6.4 411.1 L7.7 404.5 L9.2 398.0 L10.8 391.7 L12.5 385.6 L14.4 379.6 L16.3 373.7 L18.4 368.0 L20.7 362.4 L23.0 357.0 L25.5 351.6 L28.1 346.4 L30.8 341.4 L33.7 336.4 L36.6 331.6 L39.7 326.9 L42.9 322.3 L46.2 317.9 L49.7 313.6 L53.3 309.4 L56.9 305.3 L60.7 301.4 L64.6 297.5 L68.7 293.9 L72.8 290.3 L77.1 286.9 L81.5 283.6 L86.0 280.4 L90.6 277.3 L95.3 274.4 L100.2 271.6 L105.2 269.0 L110.3 266.5 L115.5 264.1 L120.8 261.8 L126.3 259.7 L131.9 257.7 L137.6 255.9 L143.5 254.1 L149.5 252.6 L155.7 251.1 L162.1 249.8 L168.6 248.6 L175.3 247.6 L182.3 246.7 L189.5 246.0 L197.1 245.3 L205.1 244.9 L213.7 244.5 L223.2 244.3 L236.2 244.2 L249.1 244.3 L258.7 244.5 L267.3 244.9 L275.3 245.3 L282.8 246.0 L290.1 246.7 L297.0 247.6 L303.8 248.6 L310.3 249.8 L316.7 251.1 L322.8 252.6 L328.9 254.1 L334.7 255.9 L340.5 257.7 L346.1 259.7 L351.5 261.8 L356.9 264.1 L362.1 266.5 L367.2 269.0 L372.2 271.6 L377.0 274.4 L381.8 277.3 L386.4 280.4 L390.9 283.6 L395.3 286.9 L399.5 290.3 L403.7 293.9 L407.7 297.5 L411.6 301.4 L415.4 305.3 L419.1 309.4 L422.7 313.6 L426.1 317.9 L429.4 322.3 L432.6 326.9 L435.7 331.6 L438.7 336.4 L441.5 341.4 L444.3 346.4 L446.9 351.6 L449.3 357.0 L451.7 362.4 L453.9 368.0 L456.0 373.7 L458.0 379.6 L459.8 385.6 L461.6 391.7 L463.2 398.0 L464.7 404.5 L466.0 411.1 L467.2 417.9 L468.3 424.9 L469.3 432.1 L470.1 439.6 L470.8 447.3 L471.4 455.5 L471.9 464.0 L472.2 473.2 L472.4 483.4Z" fill="url(#gF)"/>
<path d="M472.4 497.3 L472.4 510.1 L472.2 519.3 L471.9 527.5 L471.4 535.2 L470.9 542.4 L470.2 549.2 L469.3 555.8 L468.4 562.2 L467.3 568.4 L466.1 574.4 L464.8 580.2 L463.3 585.9 L461.7 591.4 L460.0 596.8 L458.2 602.0 L456.3 607.2 L454.2 612.2 L452.0 617.1 L449.7 621.8 L447.2 626.5 L444.7 631.0 L442.0 635.4 L439.2 639.7 L436.3 643.9 L433.2 648.0 L430.0 652.0 L426.8 655.9 L423.4 659.6 L419.8 663.3 L416.2 666.8 L412.5 670.2 L408.6 673.6 L404.6 676.8 L400.5 679.8 L396.3 682.8 L391.9 685.7 L387.5 688.4 L382.9 691.1 L378.2 693.6 L373.4 696.0 L368.4 698.3 L363.4 700.5 L358.2 702.6 L352.9 704.5 L347.4 706.4 L341.8 708.1 L336.1 709.7 L330.2 711.2 L324.2 712.5 L318.0 713.8 L311.7 714.9 L305.1 715.9 L298.3 716.8 L291.3 717.6 L284.0 718.3 L276.4 718.8 L268.3 719.2 L259.5 719.5 L249.7 719.7 L236.2 719.8 L222.6 719.7 L212.8 719.5 L204.1 719.2 L196.0 718.8 L188.3 718.3 L181.0 717.6 L174.0 716.8 L167.3 715.9 L160.7 714.9 L154.3 713.8 L148.1 712.5 L142.1 711.2 L136.3 709.7 L130.5 708.1 L125.0 706.4 L119.5 704.5 L114.2 702.6 L109.0 700.5 L103.9 698.3 L99.0 696.0 L94.2 693.6 L89.5 691.1 L84.9 688.4 L80.4 685.7 L76.1 682.8 L71.9 679.8 L67.8 676.8 L63.8 673.6 L59.9 670.2 L56.2 666.8 L52.5 663.3 L49.0 659.6 L45.6 655.9 L42.3 652.0 L39.1 648.0 L36.1 643.9 L33.2 639.7 L30.4 635.4 L27.7 631.0 L25.1 626.5 L22.7 621.8 L20.4 617.1 L18.2 612.2 L16.1 607.2 L14.1 602.0 L12.3 596.8 L10.6 591.4 L9.0 585.9 L7.6 580.2 L6.3 574.4 L5.1 568.4 L4.0 562.2 L3.0 555.8 L2.2 549.2 L1.5 542.4 L0.9 535.2 L0.5 527.5 L0.2 519.3 L-0.0 510.1 L-0.1 497.3 L-0.0 483.4 L0.2 473.2 L0.5 464.0 L1.0 455.5 L1.5 447.3 L2.2 439.6 L3.1 432.1 L4.0 424.9 L5.1 417.9 L6.4 411.1 L7.7 404.5 L9.2 398.0 L10.8 391.7 L12.5 385.6 L14.4 379.6 L16.3 373.7 L18.4 368.0 L20.7 362.4 L23.0 357.0 L25.5 351.6 L28.1 346.4 L30.8 341.4 L33.7 336.4 L36.6 331.6 L39.7 326.9 L42.9 322.3 L46.2 317.9 L49.7 313.6 L53.3 309.4 L56.9 305.3 L60.7 301.4 L64.6 297.5 L68.7 293.9 L72.8 290.3 L77.1 286.9 L81.5 283.6 L86.0 280.4 L90.6 277.3 L95.3 274.4 L100.2 271.6 L105.2 269.0 L110.3 266.5 L115.5 264.1 L120.8 261.8 L126.3 259.7 L131.9 257.7 L137.6 255.9 L143.5 254.1 L149.5 252.6 L155.7 251.1 L162.1 249.8 L168.6 248.6 L175.3 247.6 L182.3 246.7 L189.5 246.0 L197.1 245.3 L205.1 244.9 L213.7 244.5 L223.2 244.3 L236.2 244.2 L249.1 244.3 L258.7 244.5 L267.3 244.9 L275.3 245.3 L282.8 246.0 L290.1 246.7 L297.0 247.6 L303.8 248.6 L310.3 249.8 L316.7 251.1 L322.8 252.6 L328.9 254.1 L334.7 255.9 L340.5 257.7 L346.1 259.7 L351.5 261.8 L356.9 264.1 L362.1 266.5 L367.2 269.0 L372.2 271.6 L377.0 274.4 L381.8 277.3 L386.4 280.4 L390.9 283.6 L395.3 286.9 L399.5 290.3 L403.7 293.9 L407.7 297.5 L411.6 301.4 L415.4 305.3 L419.1 309.4 L422.7 313.6 L426.1 317.9 L429.4 322.3 L432.6 326.9 L435.7 331.6 L438.7 336.4 L441.5 341.4 L444.3 346.4 L446.9 351.6 L449.3 357.0 L451.7 362.4 L453.9 368.0 L456.0 373.7 L458.0 379.6 L459.8 385.6 L461.6 391.7 L463.2 398.0 L464.7 404.5 L466.0 411.1 L467.2 417.9 L468.3 424.9 L469.3 432.1 L470.1 439.6 L470.8 447.3 L471.4 455.5 L471.9 464.0 L472.2 473.2 L472.4 483.4Z" fill="none" stroke="url(#gN)" stroke-width="16" filter="url(#bl3)"/>
<path d="M454.0 400.0 L454.0 407.4 L453.8 411.4 L453.6 414.7 L453.3 417.6 L452.8 420.2 L452.3 422.6 L451.7 424.8 L451.0 427.0 L450.2 429.0 L449.3 430.9 L448.3 432.8 L447.3 434.6 L446.1 436.3 L444.8 437.9 L443.5 439.5 L442.0 441.0 L440.5 442.5 L438.8 444.0 L437.1 445.3 L435.3 446.7 L433.3 448.0 L431.3 449.2 L429.2 450.5 L427.0 451.7 L424.6 452.8 L422.2 453.9 L419.7 455.0 L417.1 456.0 L414.4 457.0 L411.5 458.0 L408.6 458.9 L405.6 459.8 L402.5 460.7 L399.2 461.5 L395.9 462.3 L392.4 463.1 L388.8 463.8 L385.1 464.5 L381.3 465.2 L377.4 465.8 L373.3 466.4 L369.1 467.0 L364.7 467.5 L360.2 468.0 L355.6 468.5 L350.8 469.0 L345.8 469.4 L340.6 469.8 L335.3 470.1 L329.7 470.5 L323.8 470.8 L317.7 471.0 L311.2 471.2 L304.4 471.4 L297.1 471.6 L289.1 471.8 L280.4 471.9 L270.5 471.9 L258.4 472.0 L236.0 472.0 L213.6 472.0 L201.5 471.9 L191.6 471.9 L182.9 471.8 L174.9 471.6 L167.6 471.4 L160.8 471.2 L154.3 471.0 L148.2 470.8 L142.3 470.5 L136.7 470.1 L131.4 469.8 L126.2 469.4 L121.2 469.0 L116.4 468.5 L111.8 468.0 L107.3 467.5 L102.9 467.0 L98.7 466.4 L94.6 465.8 L90.7 465.2 L86.9 464.5 L83.2 463.8 L79.6 463.1 L76.1 462.3 L72.8 461.5 L69.5 460.7 L66.4 459.8 L63.4 458.9 L60.5 458.0 L57.6 457.0 L54.9 456.0 L52.3 455.0 L49.8 453.9 L47.4 452.8 L45.0 451.7 L42.8 450.5 L40.7 449.2 L38.7 448.0 L36.7 446.7 L34.9 445.3 L33.2 444.0 L31.5 442.5 L30.0 441.0 L28.5 439.5 L27.2 437.9 L25.9 436.3 L24.7 434.6 L23.7 432.8 L22.7 430.9 L21.8 429.0 L21.0 427.0 L20.3 424.8 L19.7 422.6 L19.2 420.2 L18.7 417.6 L18.4 414.7 L18.2 411.4 L18.0 407.4 L18.0 400.0 L18.1 390.5 L18.2 383.9 L18.5 378.0 L18.9 372.5 L19.4 367.4 L20.1 362.6 L20.8 357.9 L21.7 353.4 L22.6 349.1 L23.7 344.8 L24.9 340.8 L26.3 336.8 L27.7 332.9 L29.2 329.2 L30.9 325.5 L32.6 321.9 L34.5 318.4 L36.5 315.0 L38.6 311.7 L40.8 308.5 L43.2 305.3 L45.6 302.2 L48.1 299.3 L50.8 296.3 L53.6 293.5 L56.4 290.8 L59.4 288.1 L62.5 285.5 L65.7 283.0 L69.0 280.5 L72.4 278.1 L76.0 275.8 L79.6 273.6 L83.3 271.5 L87.2 269.4 L91.1 267.5 L95.2 265.6 L99.4 263.7 L103.7 262.0 L108.1 260.3 L112.6 258.8 L117.2 257.3 L122.0 255.8 L126.9 254.5 L131.9 253.2 L137.0 252.0 L142.3 250.9 L147.7 249.9 L153.2 249.0 L158.9 248.1 L164.8 247.3 L170.9 246.6 L177.2 246.0 L183.7 245.5 L190.5 245.0 L197.6 244.7 L205.2 244.4 L213.5 244.2 L222.8 244.0 L236.0 244.0 L249.2 244.0 L258.5 244.2 L266.8 244.4 L274.4 244.7 L281.5 245.0 L288.3 245.5 L294.8 246.0 L301.1 246.6 L307.2 247.3 L313.1 248.1 L318.8 249.0 L324.3 249.9 L329.7 250.9 L335.0 252.0 L340.1 253.2 L345.1 254.5 L350.0 255.8 L354.8 257.3 L359.4 258.8 L363.9 260.3 L368.3 262.0 L372.6 263.7 L376.8 265.6 L380.9 267.5 L384.8 269.4 L388.7 271.5 L392.4 273.6 L396.0 275.8 L399.6 278.1 L403.0 280.5 L406.3 283.0 L409.5 285.5 L412.6 288.1 L415.6 290.8 L418.4 293.5 L421.2 296.3 L423.9 299.3 L426.4 302.2 L428.8 305.3 L431.2 308.5 L433.4 311.7 L435.5 315.0 L437.5 318.4 L439.4 321.9 L441.1 325.5 L442.8 329.2 L444.3 332.9 L445.7 336.8 L447.1 340.8 L448.3 344.8 L449.4 349.1 L450.3 353.4 L451.2 357.9 L451.9 362.6 L452.6 367.4 L453.1 372.5 L453.5 378.0 L453.8 383.9 L453.9 390.5Z" fill="url(#gG)"/>
<rect x="0" y="480" width="480" height="260" fill="url(#gH)" mask="url(#mRim)"/>
<path d="M472.4 497.3 L472.4 510.1 L472.2 519.3 L471.9 527.5 L471.4 535.2 L470.9 542.4 L470.2 549.2 L469.3 555.8 L468.4 562.2 L467.3 568.4 L466.1 574.4 L464.8 580.2 L463.3 585.9 L461.7 591.4 L460.0 596.8 L458.2 602.0 L456.3 607.2 L454.2 612.2 L452.0 617.1 L449.7 621.8 L447.2 626.5 L444.7 631.0 L442.0 635.4 L439.2 639.7 L436.3 643.9 L433.2 648.0 L430.0 652.0 L426.8 655.9 L423.4 659.6 L419.8 663.3 L416.2 666.8 L412.5 670.2 L408.6 673.6 L404.6 676.8 L400.5 679.8 L396.3 682.8 L391.9 685.7 L387.5 688.4 L382.9 691.1 L378.2 693.6 L373.4 696.0 L368.4 698.3 L363.4 700.5 L358.2 702.6 L352.9 704.5 L347.4 706.4 L341.8 708.1 L336.1 709.7 L330.2 711.2 L324.2 712.5 L318.0 713.8 L311.7 714.9 L305.1 715.9 L298.3 716.8 L291.3 717.6 L284.0 718.3 L276.4 718.8 L268.3 719.2 L259.5 719.5 L249.7 719.7 L236.2 719.8 L222.6 719.7 L212.8 719.5 L204.1 719.2 L196.0 718.8 L188.3 718.3 L181.0 717.6 L174.0 716.8 L167.3 715.9 L160.7 714.9 L154.3 713.8 L148.1 712.5 L142.1 711.2 L136.3 709.7 L130.5 708.1 L125.0 706.4 L119.5 704.5 L114.2 702.6 L109.0 700.5 L103.9 698.3 L99.0 696.0 L94.2 693.6 L89.5 691.1 L84.9 688.4 L80.4 685.7 L76.1 682.8 L71.9 679.8 L67.8 676.8 L63.8 673.6 L59.9 670.2 L56.2 666.8 L52.5 663.3 L49.0 659.6 L45.6 655.9 L42.3 652.0 L39.1 648.0 L36.1 643.9 L33.2 639.7 L30.4 635.4 L27.7 631.0 L25.1 626.5 L22.7 621.8 L20.4 617.1 L18.2 612.2 L16.1 607.2 L14.1 602.0 L12.3 596.8 L10.6 591.4 L9.0 585.9 L7.6 580.2 L6.3 574.4 L5.1 568.4 L4.0 562.2 L3.0 555.8 L2.2 549.2 L1.5 542.4 L0.9 535.2 L0.5 527.5 L0.2 519.3 L-0.0 510.1 L-0.1 497.3 L-0.0 483.4 L0.2 473.2 L0.5 464.0 L1.0 455.5 L1.5 447.3 L2.2 439.6 L3.1 432.1 L4.0 424.9 L5.1 417.9 L6.4 411.1 L7.7 404.5 L9.2 398.0 L10.8 391.7 L12.5 385.6 L14.4 379.6 L16.3 373.7 L18.4 368.0 L20.7 362.4 L23.0 357.0 L25.5 351.6 L28.1 346.4 L30.8 341.4 L33.7 336.4 L36.6 331.6 L39.7 326.9 L42.9 322.3 L46.2 317.9 L49.7 313.6 L53.3 309.4 L56.9 305.3 L60.7 301.4 L64.6 297.5 L68.7 293.9 L72.8 290.3 L77.1 286.9 L81.5 283.6 L86.0 280.4 L90.6 277.3 L95.3 274.4 L100.2 271.6 L105.2 269.0 L110.3 266.5 L115.5 264.1 L120.8 261.8 L126.3 259.7 L131.9 257.7 L137.6 255.9 L143.5 254.1 L149.5 252.6 L155.7 251.1 L162.1 249.8 L168.6 248.6 L175.3 247.6 L182.3 246.7 L189.5 246.0 L197.1 245.3 L205.1 244.9 L213.7 244.5 L223.2 244.3 L236.2 244.2 L249.1 244.3 L258.7 244.5 L267.3 244.9 L275.3 245.3 L282.8 246.0 L290.1 246.7 L297.0 247.6 L303.8 248.6 L310.3 249.8 L316.7 251.1 L322.8 252.6 L328.9 254.1 L334.7 255.9 L340.5 257.7 L346.1 259.7 L351.5 261.8 L356.9 264.1 L362.1 266.5 L367.2 269.0 L372.2 271.6 L377.0 274.4 L381.8 277.3 L386.4 280.4 L390.9 283.6 L395.3 286.9 L399.5 290.3 L403.7 293.9 L407.7 297.5 L411.6 301.4 L415.4 305.3 L419.1 309.4 L422.7 313.6 L426.1 317.9 L429.4 322.3 L432.6 326.9 L435.7 331.6 L438.7 336.4 L441.5 341.4 L444.3 346.4 L446.9 351.6 L449.3 357.0 L451.7 362.4 L453.9 368.0 L456.0 373.7 L458.0 379.6 L459.8 385.6 L461.6 391.7 L463.2 398.0 L464.7 404.5 L466.0 411.1 L467.2 417.9 L468.3 424.9 L469.3 432.1 L470.1 439.6 L470.8 447.3 L471.4 455.5 L471.9 464.0 L472.2 473.2 L472.4 483.4Z" fill="none" stroke="url(#gHd)" stroke-width="14" filter="url(#bl3)"/>
<path d="M472.4 497.3 L472.4 510.1 L472.2 519.3 L471.9 527.5 L471.4 535.2 L470.9 542.4 L470.2 549.2 L469.3 555.8 L468.4 562.2 L467.3 568.4 L466.1 574.4 L464.8 580.2 L463.3 585.9 L461.7 591.4 L460.0 596.8 L458.2 602.0 L456.3 607.2 L454.2 612.2 L452.0 617.1 L449.7 621.8 L447.2 626.5 L444.7 631.0 L442.0 635.4 L439.2 639.7 L436.3 643.9 L433.2 648.0 L430.0 652.0 L426.8 655.9 L423.4 659.6 L419.8 663.3 L416.2 666.8 L412.5 670.2 L408.6 673.6 L404.6 676.8 L400.5 679.8 L396.3 682.8 L391.9 685.7 L387.5 688.4 L382.9 691.1 L378.2 693.6 L373.4 696.0 L368.4 698.3 L363.4 700.5 L358.2 702.6 L352.9 704.5 L347.4 706.4 L341.8 708.1 L336.1 709.7 L330.2 711.2 L324.2 712.5 L318.0 713.8 L311.7 714.9 L305.1 715.9 L298.3 716.8 L291.3 717.6 L284.0 718.3 L276.4 718.8 L268.3 719.2 L259.5 719.5 L249.7 719.7 L236.2 719.8 L222.6 719.7 L212.8 719.5 L204.1 719.2 L196.0 718.8 L188.3 718.3 L181.0 717.6 L174.0 716.8 L167.3 715.9 L160.7 714.9 L154.3 713.8 L148.1 712.5 L142.1 711.2 L136.3 709.7 L130.5 708.1 L125.0 706.4 L119.5 704.5 L114.2 702.6 L109.0 700.5 L103.9 698.3 L99.0 696.0 L94.2 693.6 L89.5 691.1 L84.9 688.4 L80.4 685.7 L76.1 682.8 L71.9 679.8 L67.8 676.8 L63.8 673.6 L59.9 670.2 L56.2 666.8 L52.5 663.3 L49.0 659.6 L45.6 655.9 L42.3 652.0 L39.1 648.0 L36.1 643.9 L33.2 639.7 L30.4 635.4 L27.7 631.0 L25.1 626.5 L22.7 621.8 L20.4 617.1 L18.2 612.2 L16.1 607.2 L14.1 602.0 L12.3 596.8 L10.6 591.4 L9.0 585.9 L7.6 580.2 L6.3 574.4 L5.1 568.4 L4.0 562.2 L3.0 555.8 L2.2 549.2 L1.5 542.4 L0.9 535.2 L0.5 527.5 L0.2 519.3 L-0.0 510.1 L-0.1 497.3 L-0.0 483.4 L0.2 473.2 L0.5 464.0 L1.0 455.5 L1.5 447.3 L2.2 439.6 L3.1 432.1 L4.0 424.9 L5.1 417.9 L6.4 411.1 L7.7 404.5 L9.2 398.0 L10.8 391.7 L12.5 385.6 L14.4 379.6 L16.3 373.7 L18.4 368.0 L20.7 362.4 L23.0 357.0 L25.5 351.6 L28.1 346.4 L30.8 341.4 L33.7 336.4 L36.6 331.6 L39.7 326.9 L42.9 322.3 L46.2 317.9 L49.7 313.6 L53.3 309.4 L56.9 305.3 L60.7 301.4 L64.6 297.5 L68.7 293.9 L72.8 290.3 L77.1 286.9 L81.5 283.6 L86.0 280.4 L90.6 277.3 L95.3 274.4 L100.2 271.6 L105.2 269.0 L110.3 266.5 L115.5 264.1 L120.8 261.8 L126.3 259.7 L131.9 257.7 L137.6 255.9 L143.5 254.1 L149.5 252.6 L155.7 251.1 L162.1 249.8 L168.6 248.6 L175.3 247.6 L182.3 246.7 L189.5 246.0 L197.1 245.3 L205.1 244.9 L213.7 244.5 L223.2 244.3 L236.2 244.2 L249.1 244.3 L258.7 244.5 L267.3 244.9 L275.3 245.3 L282.8 246.0 L290.1 246.7 L297.0 247.6 L303.8 248.6 L310.3 249.8 L316.7 251.1 L322.8 252.6 L328.9 254.1 L334.7 255.9 L340.5 257.7 L346.1 259.7 L351.5 261.8 L356.9 264.1 L362.1 266.5 L367.2 269.0 L372.2 271.6 L377.0 274.4 L381.8 277.3 L386.4 280.4 L390.9 283.6 L395.3 286.9 L399.5 290.3 L403.7 293.9 L407.7 297.5 L411.6 301.4 L415.4 305.3 L419.1 309.4 L422.7 313.6 L426.1 317.9 L429.4 322.3 L432.6 326.9 L435.7 331.6 L438.7 336.4 L441.5 341.4 L444.3 346.4 L446.9 351.6 L449.3 357.0 L451.7 362.4 L453.9 368.0 L456.0 373.7 L458.0 379.6 L459.8 385.6 L461.6 391.7 L463.2 398.0 L464.7 404.5 L466.0 411.1 L467.2 417.9 L468.3 424.9 L469.3 432.1 L470.1 439.6 L470.8 447.3 L471.4 455.5 L471.9 464.0 L472.2 473.2 L472.4 483.4Z" fill="none" stroke="#0a2250" stroke-width="2.5" stroke-opacity="0.7"/>
</g>
</svg>
<div class="abs" style="left:237px;top:33px;width:1px;height:862px;background:#50f4fc"></div>
<div class="abs" style="left:0;top:481px;width:475px;height:1px;background:#50f4fc"></div>
<div id="dlg">
 <div id="title"><span>图层样式</span></div>
 <div id="body">
  <div class="list">
   <div class="abs" style="left:0;top:0;width:98px;height:22px;font-size:12px"><span class="lt" style="left:4px;top:4px">样式</span></div>
   <div class="abs" style="left:0;top:21px;width:98px;height:4px;background:#707070;border-top:1px solid #000;border-bottom:1px solid #000"></div>
   <div class="abs" style="left:0;top:25px;width:98px;height:22px;border-bottom:1px solid #000;font-size:12px"><span class="lt" style="left:4px;top:4px">混合选项:自定</span></div>
   <div class="row" style="top:47px"><span style="position:absolute;left:5px;top:4px"><span class="cb"></span></span><span class="lt" style="left:19px;top:2px">投影</span></div>
<div class="row" style="top:69px"><span style="position:absolute;left:5px;top:4px"><span class="cb"></span></span><span class="lt" style="left:19px;top:2px">内阴影</span></div>
<div class="row" style="top:91px"><span style="position:absolute;left:5px;top:4px"><span class="cb"></span></span><span class="lt" style="left:19px;top:2px">外发光</span></div>
<div class="row" style="top:113px"><span style="position:absolute;left:5px;top:4px"><span class="cb"></span></span><span class="lt" style="left:19px;top:2px">内发光</span></div>
<div class="row" style="top:135px"><span style="position:absolute;left:5px;top:4px"><span class="cb"></span></span><span class="lt" style="left:19px;top:2px">斜面和浮雕</span></div>
<div class="row" style="top:157px"><span style="position:absolute;left:19px;top:4px"><span class="cb"></span></span><span class="lt" style="left:33px;top:2px">等高线</span></div>
<div class="row" style="top:179px"><span style="position:absolute;left:19px;top:4px"><span class="cb"></span></span><span class="lt" style="left:33px;top:2px">纹理</span></div>
<div class="row" style="top:201px"><span style="position:absolute;left:5px;top:4px"><span class="cb"></span></span><span class="lt" style="left:19px;top:2px">光泽</span></div>
<div class="row" style="top:223px"><span style="position:absolute;left:5px;top:4px"><span class="cb"></span></span><span class="lt" style="left:19px;top:2px">颜色叠加</span></div>
<div class="row sel" style="top:245px"><span style="position:absolute;left:5px;top:4px"><span class="cb chk">✔</span></span><span class="lt" style="left:19px;top:2px">渐变叠加</span></div>
<div class="row" style="top:267px"><span style="position:absolute;left:5px;top:4px"><span class="cb"></span></span><span class="lt" style="left:19px;top:2px">图案叠加</span></div>
<div class="row" style="top:289px"><span style="position:absolute;left:5px;top:4px"><span class="cb"></span></span><span class="lt" style="left:19px;top:2px">描边</span></div>
<div class="row" style="top:311px;height:2px"></div>
  </div>
  <div class="gb" style="left:126px;top:16px;width:320px;height:442px"></div>
  <div class="gl" style="left:142px;top:12px">渐变叠加</div>
  <div class="gb" style="left:136px;top:35px;width:310px;height:178px"></div>
  <div class="gl" style="left:152px;top:30px">渐变</div>
  <div class="lab" style="left:153px;top:56px">混合模式(O):</div>
  <div class="inp" style="left:225px;top:52px;width:122px;height:21px;line-height:21px;padding-left:5px">滤色</div>
  <div class="abs" style="left:330px;top:54px;width:16px;height:17px;border-radius:2px;background:linear-gradient(#d4e0fb,#b4c8f4);border:1px solid #bccbf0;"><svg width="14" height="15" style="position:absolute;left:0;top:0"><path d="M3.5 5.5L7 9L10.5 5.5" fill="none" stroke="#4d6185" stroke-width="2"/></svg></div>
  <div class="lab" style="left:153px;top:78px">不透明度(P):</div>
  <div class="abs" style="left:229px;top:84px;width:97px;height:2px;border-top:1px solid #9d9c99;border-bottom:1px solid #fff;background:#e4e3de"></div>
  <svg class="abs" style="left:283px;top:79px" width="11" height="13"><path d="M0.5 5L5.5 0.5L10.5 5V12.5H0.5Z" fill="#f4f4ee" stroke="#8a9a8a" stroke-width="1"/><path d="M1 11.5H10" stroke="#21a121" stroke-width="2"/></svg>
  <div class="inp" style="left:335px;top:76px;width:38px;height:19px">60</div>
  <div class="lab" style="left:376px;top:79px">%</div>
  <div class="lab" style="left:188px;top:102px">渐变:</div>
  <div class="abs" style="left:225px;top:99px;width:122px;height:19px;border:1px solid #000;background:#fff"><div class="abs" style="left:1px;top:1px;width:108px;height:15px;background:linear-gradient(90deg,#000,#fff)"></div><div class="abs" style="left:112px;top:6px;width:0;height:0;border-left:4px solid transparent;border-right:4px solid transparent;border-top:4px solid #000"></div><div class="abs" style="left:110px;top:0;width:1px;height:17px;background:#000"></div></div>
  <div class="cb" style="position:absolute;left:357px;top:102px;width:13px;height:13px"></div>
  <div class="lab" style="left:373px;top:101px">反向(R)</div>
  <div class="lab" style="left:179px;top:126px">样式(L):</div>
  <div class="inp" style="left:225px;top:122px;width:62px;height:21px;line-height:21px;padding-left:5px">线性</div>
  <div class="abs" style="left:270px;top:124px;width:16px;height:17px;border-radius:2px;background:linear-gradient(#d4e0fb,#b4c8f4);border:1px solid #bccbf0;"><svg width="14" height="15" style="position:absolute;left:0;top:0"><path d="M3.5 5.5L7 9L10.5 5.5" fill="none" stroke="#4d6185" stroke-width="2"/></svg></div>
  <div class="cb" style="position:absolute;left:296px;top:126px;width:13px;height:13px;font-size:11px;line-height:11px">✔</div>
  <div class="lab" style="left:312px;top:125px">与图层对齐(I)</div>
  <div class="lab" style="left:178px;top:158px">角度(N):</div>
  <div class="abs" style="left:225px;top:146px;width:36px;height:36px;border-radius:50%;border:2px solid #646e8a;box-shadow:inset 0 0 0 1px #c8ccd8, 0 0 0 1px #d8dce6;background:radial-gradient(circle at 50% 45%,#fafafa,#f0f0f2 65%,#d8dae2)"><div class="abs" style="left:15px;top:-1px;width:1.5px;height:17px;background:#000"></div><div class="abs" style="left:14px;top:14px;width:3px;height:3px;background:#000"></div></div>
  <div class="inp" style="left:265px;top:154px;width:42px;height:19px">90</div>
  <div class="lab" style="left:310px;top:157px">度</div>
  <div class="lab" style="left:178px;top:189px">缩放(S):</div>
  <div class="abs" style="left:229px;top:195px;width:97px;height:2px;border-top:1px solid #9d9c99;border-bottom:1px solid #fff;background:#e4e3de"></div>
  <svg class="abs" style="left:284px;top:190px" width="11" height="13"><path d="M0.5 5L5.5 0.5L10.5 5V12.5H0.5Z" fill="#f4f4ee" stroke="#8a9a8a" stroke-width="1"/><path d="M1 11.5H10" stroke="#21a121" stroke-width="2"/></svg>
  <div class="inp" style="left:335px;top:187px;width:38px;height:18px">100</div>
  <div class="lab" style="left:376px;top:189px">%</div>
  <div class="btn" style="left:186px;top:220px;width:92px">设置为默认值</div>
  <div class="btn" style="left:287px;top:220px;width:92px">复位为默认值</div>

 </div>
 <div id="bb"></div>
 <div class="abs" style="left:3px;top:30px;width:1px;height:469px;background:#f4f8ff"></div>
 <div class="abs" style="left:3px;top:498px;width:430px;height:1px;background:#f4f8ff"></div>
</div>
<div class="abs" style="left:767px;top:852px;width:123px;height:38px;background:#fff"></div>
<div class="abs" style="left:792px;top:857px;font-size:14px;font-weight:bold;line-height:17px;letter-spacing:4px;-webkit-text-stroke:0.4px #000;text-shadow:0 0 1px #999">思洋互动</div>
<div class="abs" style="left:787px;top:873px;font-size:11px;font-weight:bold;line-height:12px;letter-spacing:0.9px;text-shadow:0 0 1px #888">www.ciya.cn</div>
</body></html>
